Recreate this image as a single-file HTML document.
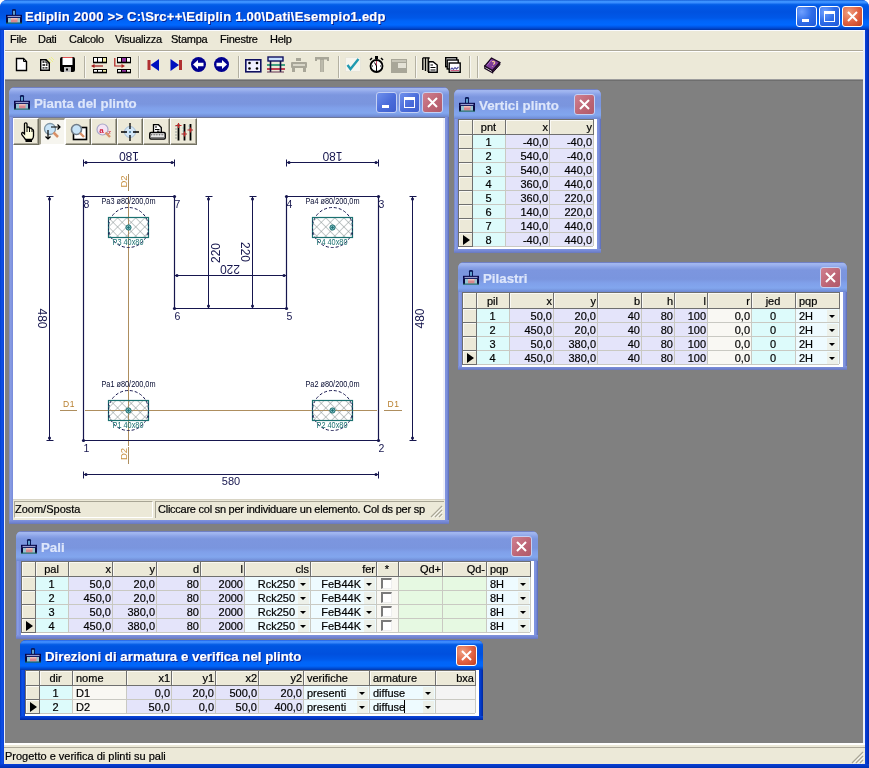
<!DOCTYPE html><html><head><meta charset="utf-8"><style>
html,body{margin:0;padding:0;}
body{width:869px;height:768px;overflow:hidden;position:relative;background:#fff;font-family:"Liberation Sans", sans-serif;font-size:11px;color:#000;}
div{box-sizing:border-box;}
svg{position:absolute;overflow:visible;}
body{-webkit-font-smoothing:antialiased;will-change:transform;-webkit-text-stroke-width:0.2px;}

</style></head><body>
<div style="position:absolute;left:0px;top:0px;width:869px;height:768px;background:#0831D9;border-radius:7px 7px 0 0;"></div>
<div style="position:absolute;left:0px;top:0px;width:869px;height:30px;border-radius:7px 7px 0 0;background:linear-gradient(to bottom,#0A4ECC 0px,#3D95FF 1px,#3A8CFF 3px,#0A66EB 4px,#0058E6 6px,#0052E0 12px,#0058E8 18px,#0064F8 21px,#0068FF 25px,#0055E5 27px,#0040C0 29px,#0030A0 30px);"></div>
<div style="position:absolute;left:0px;top:30px;width:4px;height:738px;background:linear-gradient(to right,#0040D0,#1050E8 2px,#0840D8);"></div>
<div style="position:absolute;left:865px;top:30px;width:4px;height:738px;background:linear-gradient(to right,#0840D8,#0030C0 3px,#002AA8);"></div>
<div style="position:absolute;left:0px;top:764px;width:869px;height:4px;background:linear-gradient(to bottom,#0840D8,#0030B0);"></div>
<svg style="left:6px;top:9px" width="16" height="15" viewBox="0 0 16 15"><rect x="2" y="8.6" width="12" height="5" fill="#98C4D0"/><rect x="6" y="0" width="4" height="6.5" rx="1.2" fill="#0A1A5A"/><rect x="7.2" y="1.8" width="1.6" height="4.5" fill="#78C0E8"/><rect x="0" y="5.8" width="16" height="3" fill="#06064A"/><rect x="1.5" y="6.9" width="13" height="0.9" fill="#B8C0F0"/><rect x="0" y="8.6" width="2" height="5.6" fill="#0A0A40"/><rect x="14" y="8.6" width="2" height="5.6" fill="#0A0A40"/><rect x="5" y="9" width="6.5" height="4.5" fill="#D88890"/><rect x="5" y="9" width="6.5" height="1.5" fill="#F0C0B8"/><rect x="0" y="13.6" width="16" height="1" fill="#1A6A50"/></svg>
<div style="position:absolute;left:25px;top:9px;height:16px;line-height:16px;white-space:nowrap;color:#fff;font-weight:bold;font-size:13px;letter-spacing:0.24px;text-shadow:1px 1px 0 #0A1E8C;">Ediplin 2000 &gt;&gt; C:\Src++\Ediplin 1.00\Dati\Esempio1.edp</div>
<div style="position:absolute;left:796px;top:6px;width:21px;height:21px;border:1px solid #FFFFFF;border-radius:3px;background:radial-gradient(circle at 25% 25%,#6FA0FF,#2E6CE8 50%,#1F58D8);">
<div style="position:absolute;left:5px;top:12px;width:7px;height:3px;background:#fff"></div>
</div>
<div style="position:absolute;left:819px;top:6px;width:21px;height:21px;border:1px solid #FFFFFF;border-radius:3px;background:radial-gradient(circle at 25% 25%,#6FA0FF,#2E6CE8 50%,#1F58D8);">
<div style="position:absolute;left:4px;top:4px;width:11px;height:11px;border:1px solid #fff;border-top-width:3px"></div>
</div>
<div style="position:absolute;left:842px;top:6px;width:21px;height:21px;border:1px solid #FFFFFF;border-radius:3px;background:radial-gradient(circle at 30% 30%,#F0A080,#E06040 55%,#C04020);">
<svg style="left:0;top:0" width="19" height="19"><path d="M5 5 L14 14 M14 5 L5 14" stroke="#fff" stroke-width="2"/></svg>
</div>
<div style="position:absolute;left:4px;top:30px;width:861px;height:20px;background:#ECE9D8;"></div>
<div style="position:absolute;left:10px;top:32px;height:14px;line-height:14px;white-space:nowrap;letter-spacing:-0.25px;">File</div>
<div style="position:absolute;left:38px;top:32px;height:14px;line-height:14px;white-space:nowrap;letter-spacing:-0.25px;">Dati</div>
<div style="position:absolute;left:69px;top:32px;height:14px;line-height:14px;white-space:nowrap;letter-spacing:-0.25px;">Calcolo</div>
<div style="position:absolute;left:115px;top:32px;height:14px;line-height:14px;white-space:nowrap;letter-spacing:-0.25px;">Visualizza</div>
<div style="position:absolute;left:171px;top:32px;height:14px;line-height:14px;white-space:nowrap;letter-spacing:-0.25px;">Stampa</div>
<div style="position:absolute;left:220px;top:32px;height:14px;line-height:14px;white-space:nowrap;letter-spacing:-0.25px;">Finestre</div>
<div style="position:absolute;left:270px;top:32px;height:14px;line-height:14px;white-space:nowrap;letter-spacing:-0.25px;">Help</div>
<div style="position:absolute;left:4px;top:50px;width:861px;height:1px;background:#ACA899;"></div>
<div style="position:absolute;left:4px;top:51px;width:861px;height:1px;background:#FFFFFF;"></div>
<div style="position:absolute;left:4px;top:52px;width:861px;height:28px;background:#ECE9D8;"></div>
<div style="position:absolute;left:4px;top:79px;width:861px;height:1px;background:#9D9D9D;"></div>
<div style="position:absolute;left:84px;top:56px;width:1px;height:22px;background:#B4B1A2;"></div>
<div style="position:absolute;left:85px;top:56px;width:1px;height:22px;background:#F8F7F2;"></div>
<div style="position:absolute;left:138px;top:56px;width:1px;height:22px;background:#B4B1A2;"></div>
<div style="position:absolute;left:139px;top:56px;width:1px;height:22px;background:#F8F7F2;"></div>
<div style="position:absolute;left:238px;top:56px;width:1px;height:22px;background:#B4B1A2;"></div>
<div style="position:absolute;left:239px;top:56px;width:1px;height:22px;background:#F8F7F2;"></div>
<div style="position:absolute;left:338px;top:56px;width:1px;height:22px;background:#B4B1A2;"></div>
<div style="position:absolute;left:339px;top:56px;width:1px;height:22px;background:#F8F7F2;"></div>
<div style="position:absolute;left:415px;top:56px;width:1px;height:22px;background:#B4B1A2;"></div>
<div style="position:absolute;left:416px;top:56px;width:1px;height:22px;background:#F8F7F2;"></div>
<div style="position:absolute;left:469px;top:56px;width:1px;height:22px;background:#B4B1A2;"></div>
<div style="position:absolute;left:470px;top:56px;width:1px;height:22px;background:#F8F7F2;"></div>
<div style="position:absolute;left:477px;top:56px;width:1px;height:22px;background:#B4B1A2;"></div>
<div style="position:absolute;left:478px;top:56px;width:1px;height:22px;background:#F8F7F2;"></div>
<svg style="left:15px;top:57px" width="14" height="15" viewBox="0 0 14 15"><path d="M1.5 1.5 H8.5 L11.5 4.5 V13.5 H1.5 Z" fill="#fff" stroke="#000" stroke-width="1.4"/><path d="M8.5 1.5 V4.5 H11.5" fill="none" stroke="#000" stroke-width="1"/></svg>
<svg style="left:38px;top:56px" width="18" height="16" viewBox="0 0 18 16"><path d="M11 2 L15 6 M13 1 L16 4 M9.5 3.5 L13 7" stroke="#EEF08A" stroke-width="1"/><path d="M2.7 3.7 H8 L11.3 7 V14.3 H2.7 Z" fill="#fff" stroke="#000" stroke-width="1.4"/><path d="M8 3.7 V7 H11.3" fill="none" stroke="#000" stroke-width="1"/><path d="M4.5 6 H6.5 M4.5 9 H7 M7.8 9 H9.5 M4.5 11.8 H6.5 M7.3 11.8 H9.5" stroke="#000" stroke-width="1.3"/></svg>
<svg style="left:60px;top:57px" width="15" height="15" viewBox="0 0 15 15"><rect x="0" y="0" width="15" height="15" rx="2" fill="#000"/><rect x="2.5" y="1" width="10" height="7" fill="#fff"/><rect x="2.5" y="0" width="10" height="1" fill="#E05050"/><rect x="4" y="10" width="7" height="5" fill="#C0C0C0"/><rect x="6" y="11.5" width="2" height="2" fill="#000"/></svg>
<svg style="left:90px;top:57px" width="18" height="16" viewBox="0 0 18 16"><rect x="3.5" y="0.5" width="13" height="5" fill="#fff"/><rect x="12.5" y="0.5" width="4" height="5" fill="#F4F0A8"/><rect x="3.5" y="0.5" width="13" height="5" fill="none" stroke="#000" stroke-width="1"/><path d="M7.5 0.5 V5.5 M12.5 0.5 V5.5" stroke="#000" stroke-width="1"/><path d="M3 5.5 H17" stroke="#000" stroke-width="1.6"/><rect x="3.5" y="12.5" width="13" height="3" fill="#fff"/><rect x="12.5" y="12.5" width="4" height="3" fill="#F4F0A8"/><rect x="3.5" y="12.5" width="13" height="3" fill="none" stroke="#000" stroke-width="1"/><path d="M7.5 12.5 V15.5 M12.5 12.5 V15.5" stroke="#000" stroke-width="1"/><path d="M3 15.5 H17" stroke="#000" stroke-width="1.6"/><path d="M13 9 H3" stroke="#A01818" stroke-width="1.2"/><path d="M1 9 L4.5 7 V11 Z" fill="#A01818"/></svg>
<svg style="left:114px;top:57px" width="18" height="16" viewBox="0 0 18 16"><rect x="3.5" y="0.5" width="13" height="5" fill="#fff"/><rect x="8.0" y="0.5" width="4" height="5" fill="#9030A0"/><rect x="3.5" y="0.5" width="13" height="5" fill="none" stroke="#000" stroke-width="1"/><path d="M7.5 0.5 V5.5 M12.5 0.5 V5.5" stroke="#000" stroke-width="1"/><path d="M3 5.5 H17" stroke="#000" stroke-width="1.6"/><rect x="3.5" y="12.5" width="13" height="3" fill="#fff"/><rect x="8.0" y="12.5" width="4" height="3" fill="#9030A0"/><rect x="3.5" y="12.5" width="13" height="3" fill="none" stroke="#000" stroke-width="1"/><path d="M7.5 12.5 V15.5 M12.5 12.5 V15.5" stroke="#000" stroke-width="1"/><path d="M3 15.5 H17" stroke="#000" stroke-width="1.6"/><path d="M0.8 1 V9 H9" fill="none" stroke="#B02020" stroke-width="1.2"/><path d="M11 9 L7.5 7 V11 Z" fill="#B02020"/></svg>
<svg style="left:147px;top:59px" width="13" height="12" viewBox="0 0 13 12"><rect x="0.5" y="1" width="3" height="10" fill="#B03030"/><path d="M12 0 V12 L3.5 6 Z" fill="#0010C0"/></svg>
<svg style="left:170px;top:59px" width="13" height="12" viewBox="0 0 13 12"><rect x="9" y="1" width="3" height="10" fill="#B03030"/><path d="M0.5 0 V12 L9 6 Z" fill="#0010C0"/></svg>
<svg style="left:190px;top:56px" width="17" height="17" viewBox="0 0 17 17"><circle cx="8.5" cy="8.5" r="7.5" fill="#000090"/><path d="M3 8.5 L8 4 V6.8 H13.5 V10.2 H8 V13 Z" fill="#fff"/></svg>
<svg style="left:213px;top:56px" width="17" height="17" viewBox="0 0 17 17"><circle cx="8.5" cy="8.5" r="7.5" fill="#000090"/><path d="M14 8.5 L9 4 V6.8 H3.5 V10.2 H9 V13 Z" fill="#fff"/></svg>
<svg style="left:245px;top:59px" width="17" height="14" viewBox="0 0 17 14"><rect x="0.8" y="0.8" width="15" height="12" fill="#F0F0FF" stroke="#101060" stroke-width="1.6"/><circle cx="4.5" cy="4" r="1.3" fill="#000"/><circle cx="12" cy="4" r="1.3" fill="#000"/><circle cx="4.5" cy="9.5" r="1.3" fill="#000"/><circle cx="12" cy="9.5" r="1.3" fill="#000"/></svg>
<svg style="left:267px;top:56px" width="18" height="17" viewBox="0 0 18 17"><rect x="1" y="1" width="15" height="4" fill="#C8E0FF" stroke="#101060" stroke-width="1.4"/><rect x="0" y="8" width="18" height="2" fill="#40A080"/><rect x="0" y="12" width="18" height="2" fill="#C04050"/><path d="M3.5 5 V16 M13.5 5 V16" stroke="#101040" stroke-width="1.6"/><path d="M0 16 H17" stroke="#603050" stroke-width="1"/></svg>
<svg style="left:291px;top:58px" width="16" height="14" viewBox="0 0 16 14"><rect x="5" y="0" width="5" height="3" fill="#A8A698"/><rect x="0" y="4" width="16" height="6" rx="1" fill="#A8A698"/><rect x="2" y="6" width="12" height="2" fill="#D8D6C8"/><rect x="1" y="10" width="3" height="4" fill="#A8A698"/><rect x="12" y="10" width="3" height="4" fill="#A8A698"/></svg>
<svg style="left:315px;top:57px" width="14" height="15" viewBox="0 0 14 15"><path d="M0 0 H14 V4 H12 V2.5 H9 V15 H5 V2.5 H2 V4 H0 Z" fill="#A8A698"/><path d="M6.2 3 V15 M7.8 3 V15" stroke="#D8D6C8" stroke-width="0.6"/></svg>
<svg style="left:345px;top:57px" width="16" height="15" viewBox="0 0 16 15"><rect x="0.5" y="0.5" width="15" height="14" fill="#F6F5EE" stroke="#E8E6DA" stroke-width="1"/><path d="M2.5 8 L5.5 12 L13.5 2" fill="none" stroke="#209AB0" stroke-width="2.4"/></svg>
<svg style="left:368px;top:56px" width="17" height="17" viewBox="0 0 17 17"><rect x="7" y="0" width="3" height="3" fill="#000"/><path d="M2 4 L4 2 M15 4 L13 2" stroke="#000" stroke-width="1.5"/><circle cx="8.5" cy="10" r="6" fill="#fff" stroke="#000" stroke-width="1.8"/><path d="M8.5 5 V10" stroke="#C04060" stroke-width="1"/><path d="M8.5 10 L6.5 6.5 M8.5 10 V15 M4 10 H5 M12 10 H13" stroke="#000" stroke-width="1"/></svg>
<svg style="left:391px;top:59px" width="16" height="14" viewBox="0 0 16 14"><rect x="0" y="0" width="16" height="14" fill="#A8A698"/><rect x="1" y="1" width="14" height="2" fill="#C8C6B8"/><rect x="7" y="4" width="8" height="5" fill="#E4E2D6"/></svg>
<svg style="left:422px;top:57px" width="16" height="16" viewBox="0 0 16 16"><path d="M0.8 0.8 V13 M3.5 0.8 V14 M6.2 0.8 V15" stroke="#000" stroke-width="1.4"/><path d="M1 0.8 H7 M3.5 1 H8" stroke="#000" stroke-width="1.2"/><path d="M6.7 4.7 H11 L15.2 8 V15.2 H6.7 Z" fill="#fff" stroke="#000" stroke-width="1.4"/><path d="M8.5 8 H11 M8.5 10.5 H13.5 M8.5 13 H13.5" stroke="#000" stroke-width="1.1"/></svg>
<svg style="left:445px;top:57px" width="16" height="16" viewBox="0 0 16 16"><rect x="0.7" y="0.7" width="11" height="9" fill="#fff" stroke="#000" stroke-width="1.4"/><rect x="2.2" y="3" width="11" height="9" fill="#fff" stroke="#000" stroke-width="1.4"/><rect x="4.2" y="6" width="11" height="9.3" fill="#fff" stroke="#000" stroke-width="1.4"/><path d="M5.5 12.5 L7 11 L8.5 12.5 L10 10.5 L11.5 12 L13.5 10" fill="none" stroke="#5050A0" stroke-width="1.1"/><path d="M5.5 13.5 H14" stroke="#C03060" stroke-width="0.8"/></svg>
<svg style="left:484px;top:57px" width="17" height="17" viewBox="0 0 17 17"><path d="M0.8 9 L8.5 13.5 V15.8 L0.8 11.3 Z" fill="#fff" stroke="#1A0820" stroke-width="1.2"/><path d="M8.5 13.5 L15.8 5.5 V7.8 L8.5 15.8 Z" fill="#3A1040" stroke="#1A0820" stroke-width="1"/><path d="M7.5 1 L15.8 5.5 L8.5 13.5 L0.8 9 Z" fill="#7E3C98" stroke="#1A0820" stroke-width="1.3"/><path d="M3 8.5 L7.5 3" stroke="#B070D0" stroke-width="1"/><path d="M8 4.8 Q9.8 3.8 10.6 5.2 Q11 6.5 9.2 7.5 M8.4 9.3 L8.6 9.8" fill="none" stroke="#F0C890" stroke-width="1.3"/></svg>
<div style="position:absolute;left:4px;top:80px;width:861px;height:663px;background:#808080;"></div>
<div style="position:absolute;left:9px;top:87px;width:440px;height:437px;border-radius:6px 6px 0 0;overflow:hidden;background:#7B90DC;">
<div style="position:absolute;left:0;top:0;width:440px;height:30px;background:linear-gradient(to bottom,#7080C4 0px,#7080C4 1px,#A4B8F0 1px,#9CB2EE 3px,#8CA4E8 5px,#7C96DF 8px,#7A95DE 17px,#80A0EA 21px,#82A6EE 26px,#7898E0 28px,#6E86D0 30px);"></div>
<div style="position:absolute;left:0;top:30px;width:4px;height:407px;background:linear-gradient(to right,#6A78B8,#8A9EE4 1px,#8094E0 3px,#7488D8 4px);"></div>
<div style="position:absolute;left:436px;top:30px;width:4px;height:407px;background:linear-gradient(to right,#8094E0,#7C90DC 2px,#6A7CC8 3px,#5A6AB4 4px);"></div>
<div style="position:absolute;left:0;top:433px;width:440px;height:4px;background:linear-gradient(to bottom,#8094E0,#6E80CC 3px,#6A78B8 4px);"></div>
<svg style="left:5px;top:8px" width="16" height="15" viewBox="0 0 16 15"><rect x="2" y="8.6" width="12" height="5" fill="#98C4D0"/><rect x="6" y="0" width="4" height="6.5" rx="1.2" fill="#0A1A5A"/><rect x="7.2" y="1.8" width="1.6" height="4.5" fill="#78C0E8"/><rect x="0" y="5.8" width="16" height="3" fill="#06064A"/><rect x="1.5" y="6.9" width="13" height="0.9" fill="#B8C0F0"/><rect x="0" y="8.6" width="2" height="5.6" fill="#0A0A40"/><rect x="14" y="8.6" width="2" height="5.6" fill="#0A0A40"/><rect x="5" y="9" width="6.5" height="4.5" fill="#D88890"/><rect x="5" y="9" width="6.5" height="1.5" fill="#F0C0B8"/><rect x="0" y="13.6" width="16" height="1" fill="#1A6A50"/></svg>
<div style="position:absolute;left:25px;top:9px;height:16px;line-height:16px;white-space:nowrap;color:#DDE6FB;font-weight:bold;font-size:13.3px;">Pianta del plinto</div>
</div>
<div style="position:absolute;left:422px;top:92px;width:21px;height:21px;border:1px solid #C4D0F4;border-radius:3px;background:linear-gradient(135deg,#D08090,#BC6474 60%,#B05A6A);">
<svg style="left:0;top:0" width="19" height="19"><path d="M5 5 L14 14 M14 5 L5 14" stroke="#fff" stroke-width="2"/></svg>
</div>
<div style="position:absolute;left:399px;top:92px;width:21px;height:21px;border:1px solid #C4D0F4;border-radius:3px;background:linear-gradient(135deg,#6F90EC,#4A6CDA 55%,#3E5ECE);">
<div style="position:absolute;left:4px;top:4px;width:11px;height:11px;border:1px solid #fff;border-top-width:3px"></div>
</div>
<div style="position:absolute;left:376px;top:92px;width:21px;height:21px;border:1px solid #C4D0F4;border-radius:3px;background:linear-gradient(135deg,#6F90EC,#4A6CDA 55%,#3E5ECE);">
<div style="position:absolute;left:5px;top:12px;width:7px;height:3px;background:#fff"></div>
</div>
<div style="position:absolute;left:13px;top:117px;width:432px;height:383px;background:#FFFFFF;"></div>
<div style="position:absolute;left:13px;top:117px;width:432px;height:1px;background:#6E7898;"></div>
<div style="position:absolute;left:443px;top:118px;width:2px;height:381px;background:#EEF0FA;"></div>
<div style="position:absolute;left:13px;top:118px;width:184px;height:27px;background:#ECE9D8;"></div>
<div style="position:absolute;left:13px;top:118px;width:26px;height:27px;background:#ECE9D8;border-top:1px solid #FFFFFF;border-left:1px solid #FFFFFF;border-right:1px solid #707060;border-bottom:1px solid #707060;box-shadow:inset -1px -1px 0 #ACA899;"></div>
<div style="position:absolute;left:39px;top:118px;width:26px;height:27px;background:#F6F5EF;border-top:2px solid #A09D8C;border-left:2px solid #A09D8C;border-bottom:1px solid #fff;border-right:1px solid #fff;"></div>
<div style="position:absolute;left:65px;top:118px;width:26px;height:27px;background:#ECE9D8;border-top:1px solid #FFFFFF;border-left:1px solid #FFFFFF;border-right:1px solid #707060;border-bottom:1px solid #707060;box-shadow:inset -1px -1px 0 #ACA899;"></div>
<div style="position:absolute;left:91px;top:118px;width:26px;height:27px;background:#ECE9D8;border-top:1px solid #FFFFFF;border-left:1px solid #FFFFFF;border-right:1px solid #707060;border-bottom:1px solid #707060;box-shadow:inset -1px -1px 0 #ACA899;"></div>
<div style="position:absolute;left:117px;top:118px;width:26px;height:27px;background:#ECE9D8;border-top:1px solid #FFFFFF;border-left:1px solid #FFFFFF;border-right:1px solid #707060;border-bottom:1px solid #707060;box-shadow:inset -1px -1px 0 #ACA899;"></div>
<div style="position:absolute;left:143px;top:118px;width:27px;height:27px;background:#ECE9D8;border-top:1px solid #FFFFFF;border-left:1px solid #FFFFFF;border-right:1px solid #707060;border-bottom:1px solid #707060;box-shadow:inset -1px -1px 0 #ACA899;"></div>
<div style="position:absolute;left:170px;top:118px;width:27px;height:27px;background:#ECE9D8;border-top:1px solid #FFFFFF;border-left:1px solid #FFFFFF;border-right:1px solid #707060;border-bottom:1px solid #707060;box-shadow:inset -1px -1px 0 #ACA899;"></div>
<svg style="left:21px;top:122px" width="14" height="20" viewBox="0 0 14 20"><path d="M3.5 10.5 V2 Q3.5 0.8 4.75 0.8 Q6 0.8 6 2 V6 Q6 5 7.25 5 Q8.5 5 8.5 6 V7 Q8.5 6 9.75 6 Q11 6 11 7 V8 Q11 7.2 11.8 7.5 Q12.5 8 12.5 9 V14 Q12.5 16 11 17.5 H4.5 Q3 15.5 1.2 13.2 Q0.3 12 0.8 11 Q1.5 10 2.5 11 L3.5 12 Z" fill="#FFFFE0" stroke="#000" stroke-width="1.3"/><path d="M6 6 V10 M8.5 7 V10 M11 8 V10" stroke="#000" stroke-width="1"/><rect x="4.5" y="18" width="6.5" height="2" fill="#000"/></svg>
<svg style="left:43px;top:122px" width="20" height="20" viewBox="0 0 20 20"><circle cx="7" cy="7" r="5.5" fill="#C8E4F8" stroke="#8098A8" stroke-width="1.3"/><path d="M10.5 10.5 L15 15" stroke="#D89068" stroke-width="2.5"/><path d="M8 5 H17 M14.5 2.5 L17 5 L14.5 7.5 M5 8 V17 M2.5 14.5 L5 17 L7.5 14.5" fill="none" stroke="#000" stroke-width="1.2"/></svg>
<svg style="left:70px;top:123px" width="18" height="18" viewBox="0 0 18 18"><rect x="3.5" y="4.5" width="13" height="12" fill="#fff" stroke="#000" stroke-width="1.6"/><circle cx="6.5" cy="6.5" r="5" fill="#C8E4F8" stroke="#707C88" stroke-width="1.6"/><path d="M10 10 L14 14" stroke="#D89068" stroke-width="2.4"/></svg>
<svg style="left:96px;top:123px" width="18" height="18" viewBox="0 0 18 18"><circle cx="6.5" cy="6.5" r="5.5" fill="#F4E4F4" stroke="#A8A8C8" stroke-width="1.2"/><text x="3.3" y="9.5" font-size="8" font-weight="bold" fill="#D02040" font-family="Liberation Sans">a</text><path d="M9.5 9.5 L14 14" stroke="#D89068" stroke-width="2.4"/><text x="12" y="11" font-size="6" fill="#D02040" font-family="Liberation Sans">z</text></svg>
<svg style="left:121px;top:123px" width="18" height="18" viewBox="0 0 18 18"><circle cx="9" cy="9" r="5.5" fill="#D4E8F8" stroke="#A8C0D8" stroke-width="1"/><path d="M9 0 V6 M9 12 V18 M0 9 H6 M12 9 H18" stroke="#000" stroke-width="1.3"/><path d="M8 9 H10 M9 8 V10" stroke="#5080A0" stroke-width="1"/></svg>
<svg style="left:149px;top:124px" width="17" height="16" viewBox="0 0 17 16"><path d="M4.5 0.7 H9.5 L12.3 3.5 V9 H4.5 Z" fill="#fff" stroke="#000" stroke-width="1.3"/><path d="M6 3 H8 M6 5.5 H10.5 M8 7.2 H10.5" stroke="#000" stroke-width="1"/><rect x="0.8" y="8.5" width="15.4" height="6.5" rx="1.2" fill="#fff" stroke="#000" stroke-width="1.5"/><path d="M2 10.8 H15" stroke="#707070" stroke-width="1.6" stroke-dasharray="1 0.6"/><rect x="1.5" y="12.8" width="14" height="1.6" fill="#808080"/></svg>
<svg style="left:173px;top:122px" width="20" height="20" viewBox="0 0 20 20"><path d="M2 4 H4 M2 7 H4 M2 10 H4 M2 13 H4 M2 16 H4" stroke="#909898" stroke-width="0.9"/><path d="M9 6 H11 M9 9 H11 M9 12 H11 M15 4 H17 M15 7 H17" stroke="#A8D0D8" stroke-width="0.9"/><path d="M5.5 2 V18.5 M11.5 2 V18.5 M17.5 2 V18.5" stroke="#000" stroke-width="1.8"/><path d="M2.5 3.5 H8.5 M5.5 1 V6 M14.5 8 H20 M17.5 5.5 V10.5 M8.5 12 H14 M11.5 9.5 V14.5" stroke="#C02828" stroke-width="1.2"/></svg>
<div style="position:absolute;left:13px;top:145px;width:432px;height:354px;overflow:hidden;">
<svg style="left:-13px;top:-145px" width="869" height="768" viewBox="0 0 869 768"><defs><pattern id="hatch" width="6.4" height="6.4" patternUnits="userSpaceOnUse" patternTransform="rotate(45)"><path d="M0 0 V6.4 M0 0 H6.4" stroke="#808C8C" stroke-width="0.9"/></pattern></defs><line x1="128.5" y1="174" x2="128.5" y2="191" stroke="#AE8E5E" stroke-width="1"/><line x1="128.5" y1="197" x2="128.5" y2="446" stroke="#AE8E5E" stroke-width="1"/><line x1="128.5" y1="447" x2="128.5" y2="464" stroke="#AE8E5E" stroke-width="1"/><line x1="60" y1="410.5" x2="77" y2="410.5" stroke="#AE8E5E" stroke-width="1"/><line x1="85" y1="410.5" x2="377" y2="410.5" stroke="#AE8E5E" stroke-width="1"/><line x1="384" y1="410.5" x2="402" y2="410.5" stroke="#AE8E5E" stroke-width="1"/><text x="123" y="181.5" font-size="9.5" fill="#C89040" text-anchor="middle" dominant-baseline="central" font-family="Liberation Sans" transform="rotate(-90 123 181.5)">D2</text><text x="123" y="454" font-size="9.5" fill="#C89040" text-anchor="middle" dominant-baseline="central" font-family="Liberation Sans" transform="rotate(-90 123 454)">D2</text><text x="66" y="404" font-size="8.5" fill="#B88030" text-anchor="middle" dominant-baseline="central" font-family="Liberation Sans">D</text><text x="72" y="404" font-size="8.5" fill="#B88030" text-anchor="middle" dominant-baseline="central" font-family="Liberation Sans">1</text><text x="390.5" y="404" font-size="8.5" fill="#B88030" text-anchor="middle" dominant-baseline="central" font-family="Liberation Sans">D</text><text x="396.5" y="404" font-size="8.5" fill="#B88030" text-anchor="middle" dominant-baseline="central" font-family="Liberation Sans">1</text><polygon points="83.5,440.5 378.5,440.5 378.5,196.5 286.5,196.5 286.5,308.5 174.5,308.5 174.5,196.5 83.5,196.5" fill="none" stroke="#16164E" stroke-width="1.2"/><circle cx="83.5" cy="440.5" r="1.6" fill="#16164E"/><circle cx="378.5" cy="440.5" r="1.6" fill="#16164E"/><circle cx="378.5" cy="196.5" r="1.6" fill="#16164E"/><circle cx="286.5" cy="196.5" r="1.6" fill="#16164E"/><circle cx="286.5" cy="308.5" r="1.6" fill="#16164E"/><circle cx="174.5" cy="308.5" r="1.6" fill="#16164E"/><circle cx="174.5" cy="196.5" r="1.6" fill="#16164E"/><circle cx="83.5" cy="196.5" r="1.6" fill="#16164E"/><text x="86.5" y="448.0" font-size="10.5" fill="#16164E" text-anchor="middle" dominant-baseline="central" font-family="Liberation Sans">1</text><text x="381.5" y="448.0" font-size="10.5" fill="#16164E" text-anchor="middle" dominant-baseline="central" font-family="Liberation Sans">2</text><text x="381.5" y="204.0" font-size="10.5" fill="#16164E" text-anchor="middle" dominant-baseline="central" font-family="Liberation Sans">3</text><text x="289.5" y="204.0" font-size="10.5" fill="#16164E" text-anchor="middle" dominant-baseline="central" font-family="Liberation Sans">4</text><text x="289.5" y="316.0" font-size="10.5" fill="#16164E" text-anchor="middle" dominant-baseline="central" font-family="Liberation Sans">5</text><text x="177.5" y="316.0" font-size="10.5" fill="#16164E" text-anchor="middle" dominant-baseline="central" font-family="Liberation Sans">6</text><text x="177.5" y="204.0" font-size="10.5" fill="#16164E" text-anchor="middle" dominant-baseline="central" font-family="Liberation Sans">7</text><text x="86.5" y="204.0" font-size="10.5" fill="#16164E" text-anchor="middle" dominant-baseline="central" font-family="Liberation Sans">8</text><line x1="83.5" y1="162.5" x2="174.5" y2="162.5" stroke="#16164E" stroke-width="1"/><line x1="83.5" y1="159.5" x2="83.5" y2="166.5" stroke="#16164E" stroke-width="1"/><line x1="174.5" y1="159.5" x2="174.5" y2="166.5" stroke="#16164E" stroke-width="1"/><circle cx="86.0" cy="162.5" r="1.5" fill="#16164E"/><circle cx="172.0" cy="162.5" r="1.5" fill="#16164E"/><text x="129.0" y="156" font-size="13" fill="#16164E" text-anchor="middle" dominant-baseline="central" font-family="Liberation Sans" transform="rotate(180 129.0 156)" textLength="20" lengthAdjust="spacingAndGlyphs">180</text><line x1="286.5" y1="162.5" x2="378.5" y2="162.5" stroke="#16164E" stroke-width="1"/><line x1="286.5" y1="159.5" x2="286.5" y2="166.5" stroke="#16164E" stroke-width="1"/><line x1="378.5" y1="159.5" x2="378.5" y2="166.5" stroke="#16164E" stroke-width="1"/><circle cx="289.0" cy="162.5" r="1.5" fill="#16164E"/><circle cx="376.0" cy="162.5" r="1.5" fill="#16164E"/><text x="332.5" y="156" font-size="13" fill="#16164E" text-anchor="middle" dominant-baseline="central" font-family="Liberation Sans" transform="rotate(180 332.5 156)" textLength="20" lengthAdjust="spacingAndGlyphs">180</text><line x1="83.5" y1="474.5" x2="378.5" y2="474.5" stroke="#16164E" stroke-width="1"/><line x1="83.5" y1="471.5" x2="83.5" y2="478.5" stroke="#16164E" stroke-width="1"/><line x1="378.5" y1="471.5" x2="378.5" y2="478.5" stroke="#16164E" stroke-width="1"/><circle cx="86.0" cy="474.5" r="1.5" fill="#16164E"/><circle cx="376.0" cy="474.5" r="1.5" fill="#16164E"/><text x="231.0" y="481" font-size="11" fill="#16164E" text-anchor="middle" dominant-baseline="central" font-family="Liberation Sans">580</text><line x1="49.5" y1="196.5" x2="49.5" y2="440.5" stroke="#16164E" stroke-width="1"/><line x1="46.5" y1="196.5" x2="53.5" y2="196.5" stroke="#16164E" stroke-width="1"/><line x1="46.5" y1="440.5" x2="53.5" y2="440.5" stroke="#16164E" stroke-width="1"/><circle cx="49.5" cy="199.0" r="1.5" fill="#16164E"/><circle cx="49.5" cy="438.0" r="1.5" fill="#16164E"/><text x="42" y="318.5" font-size="13" fill="#16164E" text-anchor="middle" dominant-baseline="central" font-family="Liberation Sans" transform="rotate(90 42 318.5)" textLength="20" lengthAdjust="spacingAndGlyphs">480</text><line x1="412.5" y1="196.5" x2="412.5" y2="440.5" stroke="#16164E" stroke-width="1"/><line x1="409.5" y1="196.5" x2="416.5" y2="196.5" stroke="#16164E" stroke-width="1"/><line x1="409.5" y1="440.5" x2="416.5" y2="440.5" stroke="#16164E" stroke-width="1"/><circle cx="412.5" cy="199.0" r="1.5" fill="#16164E"/><circle cx="412.5" cy="438.0" r="1.5" fill="#16164E"/><text x="419.5" y="318.5" font-size="13" fill="#16164E" text-anchor="middle" dominant-baseline="central" font-family="Liberation Sans" transform="rotate(-90 419.5 318.5)" textLength="20" lengthAdjust="spacingAndGlyphs">480</text><line x1="208.5" y1="196.5" x2="208.5" y2="308.5" stroke="#16164E" stroke-width="1"/><line x1="205.5" y1="196.5" x2="212.5" y2="196.5" stroke="#16164E" stroke-width="1"/><circle cx="208.5" cy="199" r="1.5" fill="#16164E"/><circle cx="208.5" cy="306" r="1.5" fill="#16164E"/><text x="215" y="253" font-size="13" fill="#16164E" text-anchor="middle" dominant-baseline="central" font-family="Liberation Sans" transform="rotate(-90 215 253)" textLength="20" lengthAdjust="spacingAndGlyphs">220</text><line x1="252.5" y1="196.5" x2="252.5" y2="308.5" stroke="#16164E" stroke-width="1"/><line x1="249.5" y1="196.5" x2="256.5" y2="196.5" stroke="#16164E" stroke-width="1"/><circle cx="252.5" cy="199" r="1.5" fill="#16164E"/><circle cx="252.5" cy="306" r="1.5" fill="#16164E"/><text x="245.5" y="252" font-size="13" fill="#16164E" text-anchor="middle" dominant-baseline="central" font-family="Liberation Sans" transform="rotate(90 245.5 252)" textLength="20" lengthAdjust="spacingAndGlyphs">220</text><line x1="174.5" y1="275.5" x2="286.5" y2="275.5" stroke="#16164E" stroke-width="1"/><circle cx="177" cy="275.5" r="1.5" fill="#16164E"/><circle cx="284" cy="275.5" r="1.5" fill="#16164E"/><text x="230" y="269" font-size="13" fill="#16164E" text-anchor="middle" dominant-baseline="central" font-family="Liberation Sans" transform="rotate(180 230 269)" textLength="20" lengthAdjust="spacingAndGlyphs">220</text><circle cx="128.5" cy="410.5" r="20" fill="none" stroke="#16164E" stroke-width="1" stroke-dasharray="3 2"/><rect x="108.5" y="400.5" width="40" height="20" fill="url(#hatch)"/><rect x="108.5" y="400.5" width="40" height="20" fill="none" stroke="#1A7070" stroke-width="1.2"/><path d="M108.5 403.5 V417.5 M148.5 403.5 V417.5" stroke="#16164E" stroke-width="0.8" stroke-dasharray="2 2"/><circle cx="128.5" cy="410.5" r="2.6" fill="#80B8C0" stroke="#1A7070" stroke-width="1"/><path d="M127.0 410.5 H130.0 M128.5 409.0 V412.0" stroke="#1A7070" stroke-width="0.8"/><text x="128.5" y="383.5" font-size="8.5" fill="#050A30" text-anchor="middle" dominant-baseline="central" font-family="Liberation Sans" textLength="54" lengthAdjust="spacingAndGlyphs">Pa1 ø80/200,0m</text><text x="128.0" y="425.0" font-size="8.5" fill="#1A7070" text-anchor="middle" dominant-baseline="central" font-family="Liberation Sans" textLength="31" lengthAdjust="spacingAndGlyphs">P1 40x80</text><circle cx="332.5" cy="410.5" r="20" fill="none" stroke="#16164E" stroke-width="1" stroke-dasharray="3 2"/><rect x="312.5" y="400.5" width="40" height="20" fill="url(#hatch)"/><rect x="312.5" y="400.5" width="40" height="20" fill="none" stroke="#1A7070" stroke-width="1.2"/><path d="M312.5 403.5 V417.5 M352.5 403.5 V417.5" stroke="#16164E" stroke-width="0.8" stroke-dasharray="2 2"/><circle cx="332.5" cy="410.5" r="2.6" fill="#80B8C0" stroke="#1A7070" stroke-width="1"/><path d="M331.0 410.5 H334.0 M332.5 409.0 V412.0" stroke="#1A7070" stroke-width="0.8"/><text x="332.5" y="383.5" font-size="8.5" fill="#050A30" text-anchor="middle" dominant-baseline="central" font-family="Liberation Sans" textLength="54" lengthAdjust="spacingAndGlyphs">Pa2 ø80/200,0m</text><text x="332.0" y="425.0" font-size="8.5" fill="#1A7070" text-anchor="middle" dominant-baseline="central" font-family="Liberation Sans" textLength="31" lengthAdjust="spacingAndGlyphs">P2 40x80</text><circle cx="128.5" cy="227.5" r="20" fill="none" stroke="#16164E" stroke-width="1" stroke-dasharray="3 2"/><rect x="108.5" y="217.5" width="40" height="20" fill="url(#hatch)"/><rect x="108.5" y="217.5" width="40" height="20" fill="none" stroke="#1A7070" stroke-width="1.2"/><path d="M108.5 220.5 V234.5 M148.5 220.5 V234.5" stroke="#16164E" stroke-width="0.8" stroke-dasharray="2 2"/><circle cx="128.5" cy="227.5" r="2.6" fill="#80B8C0" stroke="#1A7070" stroke-width="1"/><path d="M127.0 227.5 H130.0 M128.5 226.0 V229.0" stroke="#1A7070" stroke-width="0.8"/><text x="128.5" y="200.5" font-size="8.5" fill="#050A30" text-anchor="middle" dominant-baseline="central" font-family="Liberation Sans" textLength="54" lengthAdjust="spacingAndGlyphs">Pa3 ø80/200,0m</text><text x="128.0" y="242.0" font-size="8.5" fill="#1A7070" text-anchor="middle" dominant-baseline="central" font-family="Liberation Sans" textLength="31" lengthAdjust="spacingAndGlyphs">P3 40x80</text><circle cx="332.5" cy="227.5" r="20" fill="none" stroke="#16164E" stroke-width="1" stroke-dasharray="3 2"/><rect x="312.5" y="217.5" width="40" height="20" fill="url(#hatch)"/><rect x="312.5" y="217.5" width="40" height="20" fill="none" stroke="#1A7070" stroke-width="1.2"/><path d="M312.5 220.5 V234.5 M352.5 220.5 V234.5" stroke="#16164E" stroke-width="0.8" stroke-dasharray="2 2"/><circle cx="332.5" cy="227.5" r="2.6" fill="#80B8C0" stroke="#1A7070" stroke-width="1"/><path d="M331.0 227.5 H334.0 M332.5 226.0 V229.0" stroke="#1A7070" stroke-width="0.8"/><text x="332.5" y="200.5" font-size="8.5" fill="#050A30" text-anchor="middle" dominant-baseline="central" font-family="Liberation Sans" textLength="54" lengthAdjust="spacingAndGlyphs">Pa4 ø80/200,0m</text><text x="332.0" y="242.0" font-size="8.5" fill="#1A7070" text-anchor="middle" dominant-baseline="central" font-family="Liberation Sans" textLength="31" lengthAdjust="spacingAndGlyphs">P4 40x80</text></svg>
</div>
<div style="position:absolute;left:13px;top:499px;width:432px;height:21px;background:#ECE9D8;"></div>
<div style="position:absolute;left:13px;top:499px;width:432px;height:1px;background:#D8D4C4;"></div>
<div style="position:absolute;left:14px;top:501px;width:139px;height:17px;border-top:1px solid #A8A595;border-left:1px solid #A8A595;border-right:1px solid #FFFFFF;border-bottom:1px solid #FFFFFF;"></div>
<div style="position:absolute;left:155px;top:501px;width:289px;height:17px;border-top:1px solid #A8A595;border-left:1px solid #A8A595;"></div>
<div style="position:absolute;left:15px;top:502px;height:15px;line-height:15px;white-space:nowrap;">Zoom/Sposta</div>
<div style="position:absolute;left:158px;top:502px;height:15px;line-height:15px;white-space:nowrap;letter-spacing:-0.25px;">Cliccare col sn per individuare un elemento. Col ds per sp</div>
<svg style="left:430px;top:505px" width="13" height="13" viewBox="0 0 13 13"><path d="M12 1 L1 12 M12 5 L5 12 M12 9 L9 12" stroke="#A8A595" stroke-width="1.2"/><path d="M12.8 2 L2 12.8 M12.8 6 L6 12.8 M12.8 10 L10 12.8" stroke="#fff" stroke-width="0.8"/></svg>
<div style="position:absolute;left:454px;top:89px;width:147px;height:164px;border-radius:6px 6px 0 0;overflow:hidden;background:#7B90DC;">
<div style="position:absolute;left:0;top:0;width:147px;height:30px;background:linear-gradient(to bottom,#7080C4 0px,#7080C4 1px,#A4B8F0 1px,#9CB2EE 3px,#8CA4E8 5px,#7C96DF 8px,#7A95DE 17px,#80A0EA 21px,#82A6EE 26px,#7898E0 28px,#6E86D0 30px);"></div>
<div style="position:absolute;left:0;top:30px;width:4px;height:134px;background:linear-gradient(to right,#6A78B8,#8A9EE4 1px,#8094E0 3px,#7488D8 4px);"></div>
<div style="position:absolute;left:143px;top:30px;width:4px;height:134px;background:linear-gradient(to right,#8094E0,#7C90DC 2px,#6A7CC8 3px,#5A6AB4 4px);"></div>
<div style="position:absolute;left:0;top:160px;width:147px;height:4px;background:linear-gradient(to bottom,#8094E0,#6E80CC 3px,#6A78B8 4px);"></div>
<svg style="left:5px;top:8px" width="16" height="15" viewBox="0 0 16 15"><rect x="2" y="8.6" width="12" height="5" fill="#98C4D0"/><rect x="6" y="0" width="4" height="6.5" rx="1.2" fill="#0A1A5A"/><rect x="7.2" y="1.8" width="1.6" height="4.5" fill="#78C0E8"/><rect x="0" y="5.8" width="16" height="3" fill="#06064A"/><rect x="1.5" y="6.9" width="13" height="0.9" fill="#B8C0F0"/><rect x="0" y="8.6" width="2" height="5.6" fill="#0A0A40"/><rect x="14" y="8.6" width="2" height="5.6" fill="#0A0A40"/><rect x="5" y="9" width="6.5" height="4.5" fill="#D88890"/><rect x="5" y="9" width="6.5" height="1.5" fill="#F0C0B8"/><rect x="0" y="13.6" width="16" height="1" fill="#1A6A50"/></svg>
<div style="position:absolute;left:25px;top:9px;height:16px;line-height:16px;white-space:nowrap;color:#DDE6FB;font-weight:bold;font-size:13.3px;">Vertici plinto</div>
</div>
<div style="position:absolute;left:574px;top:94px;width:21px;height:21px;border:1px solid #C4D0F4;border-radius:3px;background:linear-gradient(135deg,#D08090,#BC6474 60%,#B05A6A);">
<svg style="left:0;top:0" width="19" height="19"><path d="M5 5 L14 14 M14 5 L5 14" stroke="#fff" stroke-width="2"/></svg>
</div>
<div style="position:absolute;left:458px;top:119px;width:139px;height:130px;background:#FFFFFF;"></div>
<div style="position:absolute;left:458px;top:119px;width:135px;height:15px;background:#ECE9D8;"></div>
<div style="position:absolute;left:458px;top:119px;width:14px;height:127px;background:#ECE9D8;"></div>
<div style="position:absolute;left:472px;top:134px;width:33px;height:112px;background:#DDFBFB;"></div>
<div style="position:absolute;left:505px;top:134px;width:44px;height:112px;background:#E4E4FA;"></div>
<div style="position:absolute;left:549px;top:134px;width:44px;height:112px;background:#E4E4FA;"></div>
<div style="position:absolute;left:472px;top:148px;width:121px;height:1px;background:#C9C9C2;"></div>
<div style="position:absolute;left:472px;top:162px;width:121px;height:1px;background:#C9C9C2;"></div>
<div style="position:absolute;left:472px;top:176px;width:121px;height:1px;background:#C9C9C2;"></div>
<div style="position:absolute;left:472px;top:190px;width:121px;height:1px;background:#C9C9C2;"></div>
<div style="position:absolute;left:472px;top:204px;width:121px;height:1px;background:#C9C9C2;"></div>
<div style="position:absolute;left:472px;top:218px;width:121px;height:1px;background:#C9C9C2;"></div>
<div style="position:absolute;left:472px;top:232px;width:121px;height:1px;background:#C9C9C2;"></div>
<div style="position:absolute;left:472px;top:246px;width:121px;height:1px;background:#C9C9C2;"></div>
<div style="position:absolute;left:505px;top:134px;width:1px;height:112px;background:#C9C9C2;"></div>
<div style="position:absolute;left:549px;top:134px;width:1px;height:112px;background:#C9C9C2;"></div>
<div style="position:absolute;left:593px;top:134px;width:1px;height:112px;background:#C9C9C2;"></div>
<div style="position:absolute;left:458px;top:119px;width:136px;height:1px;background:#6F6F6F;"></div>
<div style="position:absolute;left:458px;top:119px;width:1px;height:128px;background:#6F6F6F;"></div>
<div style="position:absolute;left:458px;top:134px;width:136px;height:1px;background:#6F6F6F;"></div>
<div style="position:absolute;left:472px;top:119px;width:1px;height:15px;background:#6F6F6F;"></div>
<div style="position:absolute;left:505px;top:119px;width:1px;height:15px;background:#6F6F6F;"></div>
<div style="position:absolute;left:549px;top:119px;width:1px;height:15px;background:#6F6F6F;"></div>
<div style="position:absolute;left:593px;top:119px;width:1px;height:15px;background:#6F6F6F;"></div>
<div style="position:absolute;left:472px;top:119px;width:1px;height:128px;background:#6F6F6F;"></div>
<div style="position:absolute;left:458px;top:148px;width:14px;height:1px;background:#6F6F6F;"></div>
<div style="position:absolute;left:458px;top:162px;width:14px;height:1px;background:#6F6F6F;"></div>
<div style="position:absolute;left:458px;top:176px;width:14px;height:1px;background:#6F6F6F;"></div>
<div style="position:absolute;left:458px;top:190px;width:14px;height:1px;background:#6F6F6F;"></div>
<div style="position:absolute;left:458px;top:204px;width:14px;height:1px;background:#6F6F6F;"></div>
<div style="position:absolute;left:458px;top:218px;width:14px;height:1px;background:#6F6F6F;"></div>
<div style="position:absolute;left:458px;top:232px;width:14px;height:1px;background:#6F6F6F;"></div>
<div style="position:absolute;left:458px;top:246px;width:14px;height:1px;background:#6F6F6F;"></div>
<div style="position:absolute;left:459px;top:120px;width:13px;height:1px;background:#FAF9F4;"></div>
<div style="position:absolute;left:459px;top:120px;width:1px;height:14px;background:#FAF9F4;"></div>
<div style="position:absolute;left:473px;top:120px;width:32px;height:1px;background:#FAF9F4;"></div>
<div style="position:absolute;left:473px;top:120px;width:1px;height:14px;background:#FAF9F4;"></div>
<div style="position:absolute;left:506px;top:120px;width:43px;height:1px;background:#FAF9F4;"></div>
<div style="position:absolute;left:506px;top:120px;width:1px;height:14px;background:#FAF9F4;"></div>
<div style="position:absolute;left:550px;top:120px;width:43px;height:1px;background:#FAF9F4;"></div>
<div style="position:absolute;left:550px;top:120px;width:1px;height:14px;background:#FAF9F4;"></div>
<div style="position:absolute;left:459px;top:135px;width:1px;height:13px;background:#FAF9F4;"></div>
<div style="position:absolute;left:459px;top:135px;width:13px;height:1px;background:#FAF9F4;"></div>
<div style="position:absolute;left:459px;top:149px;width:1px;height:13px;background:#FAF9F4;"></div>
<div style="position:absolute;left:459px;top:149px;width:13px;height:1px;background:#FAF9F4;"></div>
<div style="position:absolute;left:459px;top:163px;width:1px;height:13px;background:#FAF9F4;"></div>
<div style="position:absolute;left:459px;top:163px;width:13px;height:1px;background:#FAF9F4;"></div>
<div style="position:absolute;left:459px;top:177px;width:1px;height:13px;background:#FAF9F4;"></div>
<div style="position:absolute;left:459px;top:177px;width:13px;height:1px;background:#FAF9F4;"></div>
<div style="position:absolute;left:459px;top:191px;width:1px;height:13px;background:#FAF9F4;"></div>
<div style="position:absolute;left:459px;top:191px;width:13px;height:1px;background:#FAF9F4;"></div>
<div style="position:absolute;left:459px;top:205px;width:1px;height:13px;background:#FAF9F4;"></div>
<div style="position:absolute;left:459px;top:205px;width:13px;height:1px;background:#FAF9F4;"></div>
<div style="position:absolute;left:459px;top:219px;width:1px;height:13px;background:#FAF9F4;"></div>
<div style="position:absolute;left:459px;top:219px;width:13px;height:1px;background:#FAF9F4;"></div>
<div style="position:absolute;left:459px;top:233px;width:1px;height:13px;background:#FAF9F4;"></div>
<div style="position:absolute;left:459px;top:233px;width:13px;height:1px;background:#FAF9F4;"></div>
<div style="position:absolute;left:472px;width:33px;top:120px;height:15px;line-height:15px;white-space:nowrap;text-align:center;">pnt</div>
<div style="position:absolute;right:321px;top:120px;height:15px;line-height:15px;white-space:nowrap;text-align:right;">x</div>
<div style="position:absolute;right:277px;top:120px;height:15px;line-height:15px;white-space:nowrap;text-align:right;">y</div>
<div style="position:absolute;left:472px;width:33px;top:135px;height:14px;line-height:14px;white-space:nowrap;text-align:center;">1</div>
<div style="position:absolute;right:321px;top:135px;height:14px;line-height:14px;white-space:nowrap;text-align:right;">-40,0</div>
<div style="position:absolute;right:277px;top:135px;height:14px;line-height:14px;white-space:nowrap;text-align:right;">-40,0</div>
<div style="position:absolute;left:472px;width:33px;top:149px;height:14px;line-height:14px;white-space:nowrap;text-align:center;">2</div>
<div style="position:absolute;right:321px;top:149px;height:14px;line-height:14px;white-space:nowrap;text-align:right;">540,0</div>
<div style="position:absolute;right:277px;top:149px;height:14px;line-height:14px;white-space:nowrap;text-align:right;">-40,0</div>
<div style="position:absolute;left:472px;width:33px;top:163px;height:14px;line-height:14px;white-space:nowrap;text-align:center;">3</div>
<div style="position:absolute;right:321px;top:163px;height:14px;line-height:14px;white-space:nowrap;text-align:right;">540,0</div>
<div style="position:absolute;right:277px;top:163px;height:14px;line-height:14px;white-space:nowrap;text-align:right;">440,0</div>
<div style="position:absolute;left:472px;width:33px;top:177px;height:14px;line-height:14px;white-space:nowrap;text-align:center;">4</div>
<div style="position:absolute;right:321px;top:177px;height:14px;line-height:14px;white-space:nowrap;text-align:right;">360,0</div>
<div style="position:absolute;right:277px;top:177px;height:14px;line-height:14px;white-space:nowrap;text-align:right;">440,0</div>
<div style="position:absolute;left:472px;width:33px;top:191px;height:14px;line-height:14px;white-space:nowrap;text-align:center;">5</div>
<div style="position:absolute;right:321px;top:191px;height:14px;line-height:14px;white-space:nowrap;text-align:right;">360,0</div>
<div style="position:absolute;right:277px;top:191px;height:14px;line-height:14px;white-space:nowrap;text-align:right;">220,0</div>
<div style="position:absolute;left:472px;width:33px;top:205px;height:14px;line-height:14px;white-space:nowrap;text-align:center;">6</div>
<div style="position:absolute;right:321px;top:205px;height:14px;line-height:14px;white-space:nowrap;text-align:right;">140,0</div>
<div style="position:absolute;right:277px;top:205px;height:14px;line-height:14px;white-space:nowrap;text-align:right;">220,0</div>
<div style="position:absolute;left:472px;width:33px;top:219px;height:14px;line-height:14px;white-space:nowrap;text-align:center;">7</div>
<div style="position:absolute;right:321px;top:219px;height:14px;line-height:14px;white-space:nowrap;text-align:right;">140,0</div>
<div style="position:absolute;right:277px;top:219px;height:14px;line-height:14px;white-space:nowrap;text-align:right;">440,0</div>
<div style="position:absolute;left:472px;width:33px;top:233px;height:14px;line-height:14px;white-space:nowrap;text-align:center;">8</div>
<div style="position:absolute;right:321px;top:233px;height:14px;line-height:14px;white-space:nowrap;text-align:right;">-40,0</div>
<div style="position:absolute;right:277px;top:233px;height:14px;line-height:14px;white-space:nowrap;text-align:right;">440,0</div>
<svg style="left:463px;top:235px" width="7" height="10" viewBox="0 0 7 10"><path d="M0 0 L7 5 L0 10 Z" fill="#000"/></svg>
<div style="position:absolute;left:458px;top:262px;width:389px;height:108px;border-radius:6px 6px 0 0;overflow:hidden;background:#7B90DC;">
<div style="position:absolute;left:0;top:0;width:389px;height:30px;background:linear-gradient(to bottom,#7080C4 0px,#7080C4 1px,#A4B8F0 1px,#9CB2EE 3px,#8CA4E8 5px,#7C96DF 8px,#7A95DE 17px,#80A0EA 21px,#82A6EE 26px,#7898E0 28px,#6E86D0 30px);"></div>
<div style="position:absolute;left:0;top:30px;width:4px;height:78px;background:linear-gradient(to right,#6A78B8,#8A9EE4 1px,#8094E0 3px,#7488D8 4px);"></div>
<div style="position:absolute;left:385px;top:30px;width:4px;height:78px;background:linear-gradient(to right,#8094E0,#7C90DC 2px,#6A7CC8 3px,#5A6AB4 4px);"></div>
<div style="position:absolute;left:0;top:104px;width:389px;height:4px;background:linear-gradient(to bottom,#8094E0,#6E80CC 3px,#6A78B8 4px);"></div>
<svg style="left:5px;top:8px" width="16" height="15" viewBox="0 0 16 15"><rect x="2" y="8.6" width="12" height="5" fill="#98C4D0"/><rect x="6" y="0" width="4" height="6.5" rx="1.2" fill="#0A1A5A"/><rect x="7.2" y="1.8" width="1.6" height="4.5" fill="#78C0E8"/><rect x="0" y="5.8" width="16" height="3" fill="#06064A"/><rect x="1.5" y="6.9" width="13" height="0.9" fill="#B8C0F0"/><rect x="0" y="8.6" width="2" height="5.6" fill="#0A0A40"/><rect x="14" y="8.6" width="2" height="5.6" fill="#0A0A40"/><rect x="5" y="9" width="6.5" height="4.5" fill="#D88890"/><rect x="5" y="9" width="6.5" height="1.5" fill="#F0C0B8"/><rect x="0" y="13.6" width="16" height="1" fill="#1A6A50"/></svg>
<div style="position:absolute;left:25px;top:9px;height:16px;line-height:16px;white-space:nowrap;color:#DDE6FB;font-weight:bold;font-size:13.3px;">Pilastri</div>
</div>
<div style="position:absolute;left:820px;top:267px;width:21px;height:21px;border:1px solid #C4D0F4;border-radius:3px;background:linear-gradient(135deg,#D08090,#BC6474 60%,#B05A6A);">
<svg style="left:0;top:0" width="19" height="19"><path d="M5 5 L14 14 M14 5 L5 14" stroke="#fff" stroke-width="2"/></svg>
</div>
<div style="position:absolute;left:462px;top:292px;width:381px;height:75px;background:#FFFFFF;"></div>
<div style="position:absolute;left:462px;top:292px;width:377px;height:16px;background:#ECE9D8;"></div>
<div style="position:absolute;left:462px;top:292px;width:14px;height:72px;background:#ECE9D8;"></div>
<div style="position:absolute;left:476px;top:308px;width:33px;height:56px;background:#DDFBFB;"></div>
<div style="position:absolute;left:509px;top:308px;width:44px;height:56px;background:#E4E4FA;"></div>
<div style="position:absolute;left:553px;top:308px;width:44px;height:56px;background:#E4E4FA;"></div>
<div style="position:absolute;left:597px;top:308px;width:44px;height:56px;background:#E4E4FA;"></div>
<div style="position:absolute;left:641px;top:308px;width:33px;height:56px;background:#E4E4FA;"></div>
<div style="position:absolute;left:674px;top:308px;width:33px;height:56px;background:#E4E4FA;"></div>
<div style="position:absolute;left:707px;top:308px;width:44px;height:56px;background:#F9F8F3;"></div>
<div style="position:absolute;left:751px;top:308px;width:44px;height:56px;background:#DDFBFB;"></div>
<div style="position:absolute;left:795px;top:308px;width:44px;height:56px;background:#EEFBFF;"></div>
<div style="position:absolute;left:476px;top:322px;width:363px;height:1px;background:#C9C9C2;"></div>
<div style="position:absolute;left:476px;top:336px;width:363px;height:1px;background:#C9C9C2;"></div>
<div style="position:absolute;left:476px;top:350px;width:363px;height:1px;background:#C9C9C2;"></div>
<div style="position:absolute;left:476px;top:364px;width:363px;height:1px;background:#C9C9C2;"></div>
<div style="position:absolute;left:509px;top:308px;width:1px;height:56px;background:#C9C9C2;"></div>
<div style="position:absolute;left:553px;top:308px;width:1px;height:56px;background:#C9C9C2;"></div>
<div style="position:absolute;left:597px;top:308px;width:1px;height:56px;background:#C9C9C2;"></div>
<div style="position:absolute;left:641px;top:308px;width:1px;height:56px;background:#C9C9C2;"></div>
<div style="position:absolute;left:674px;top:308px;width:1px;height:56px;background:#C9C9C2;"></div>
<div style="position:absolute;left:707px;top:308px;width:1px;height:56px;background:#C9C9C2;"></div>
<div style="position:absolute;left:751px;top:308px;width:1px;height:56px;background:#C9C9C2;"></div>
<div style="position:absolute;left:795px;top:308px;width:1px;height:56px;background:#C9C9C2;"></div>
<div style="position:absolute;left:839px;top:308px;width:1px;height:56px;background:#C9C9C2;"></div>
<div style="position:absolute;left:462px;top:292px;width:378px;height:1px;background:#6F6F6F;"></div>
<div style="position:absolute;left:462px;top:292px;width:1px;height:73px;background:#6F6F6F;"></div>
<div style="position:absolute;left:462px;top:308px;width:378px;height:1px;background:#6F6F6F;"></div>
<div style="position:absolute;left:476px;top:292px;width:1px;height:16px;background:#6F6F6F;"></div>
<div style="position:absolute;left:509px;top:292px;width:1px;height:16px;background:#6F6F6F;"></div>
<div style="position:absolute;left:553px;top:292px;width:1px;height:16px;background:#6F6F6F;"></div>
<div style="position:absolute;left:597px;top:292px;width:1px;height:16px;background:#6F6F6F;"></div>
<div style="position:absolute;left:641px;top:292px;width:1px;height:16px;background:#6F6F6F;"></div>
<div style="position:absolute;left:674px;top:292px;width:1px;height:16px;background:#6F6F6F;"></div>
<div style="position:absolute;left:707px;top:292px;width:1px;height:16px;background:#6F6F6F;"></div>
<div style="position:absolute;left:751px;top:292px;width:1px;height:16px;background:#6F6F6F;"></div>
<div style="position:absolute;left:795px;top:292px;width:1px;height:16px;background:#6F6F6F;"></div>
<div style="position:absolute;left:839px;top:292px;width:1px;height:16px;background:#6F6F6F;"></div>
<div style="position:absolute;left:476px;top:292px;width:1px;height:73px;background:#6F6F6F;"></div>
<div style="position:absolute;left:462px;top:322px;width:14px;height:1px;background:#6F6F6F;"></div>
<div style="position:absolute;left:462px;top:336px;width:14px;height:1px;background:#6F6F6F;"></div>
<div style="position:absolute;left:462px;top:350px;width:14px;height:1px;background:#6F6F6F;"></div>
<div style="position:absolute;left:462px;top:364px;width:14px;height:1px;background:#6F6F6F;"></div>
<div style="position:absolute;left:463px;top:293px;width:13px;height:1px;background:#FAF9F4;"></div>
<div style="position:absolute;left:463px;top:293px;width:1px;height:15px;background:#FAF9F4;"></div>
<div style="position:absolute;left:477px;top:293px;width:32px;height:1px;background:#FAF9F4;"></div>
<div style="position:absolute;left:477px;top:293px;width:1px;height:15px;background:#FAF9F4;"></div>
<div style="position:absolute;left:510px;top:293px;width:43px;height:1px;background:#FAF9F4;"></div>
<div style="position:absolute;left:510px;top:293px;width:1px;height:15px;background:#FAF9F4;"></div>
<div style="position:absolute;left:554px;top:293px;width:43px;height:1px;background:#FAF9F4;"></div>
<div style="position:absolute;left:554px;top:293px;width:1px;height:15px;background:#FAF9F4;"></div>
<div style="position:absolute;left:598px;top:293px;width:43px;height:1px;background:#FAF9F4;"></div>
<div style="position:absolute;left:598px;top:293px;width:1px;height:15px;background:#FAF9F4;"></div>
<div style="position:absolute;left:642px;top:293px;width:32px;height:1px;background:#FAF9F4;"></div>
<div style="position:absolute;left:642px;top:293px;width:1px;height:15px;background:#FAF9F4;"></div>
<div style="position:absolute;left:675px;top:293px;width:32px;height:1px;background:#FAF9F4;"></div>
<div style="position:absolute;left:675px;top:293px;width:1px;height:15px;background:#FAF9F4;"></div>
<div style="position:absolute;left:708px;top:293px;width:43px;height:1px;background:#FAF9F4;"></div>
<div style="position:absolute;left:708px;top:293px;width:1px;height:15px;background:#FAF9F4;"></div>
<div style="position:absolute;left:752px;top:293px;width:43px;height:1px;background:#FAF9F4;"></div>
<div style="position:absolute;left:752px;top:293px;width:1px;height:15px;background:#FAF9F4;"></div>
<div style="position:absolute;left:796px;top:293px;width:43px;height:1px;background:#FAF9F4;"></div>
<div style="position:absolute;left:796px;top:293px;width:1px;height:15px;background:#FAF9F4;"></div>
<div style="position:absolute;left:463px;top:309px;width:1px;height:13px;background:#FAF9F4;"></div>
<div style="position:absolute;left:463px;top:309px;width:13px;height:1px;background:#FAF9F4;"></div>
<div style="position:absolute;left:463px;top:323px;width:1px;height:13px;background:#FAF9F4;"></div>
<div style="position:absolute;left:463px;top:323px;width:13px;height:1px;background:#FAF9F4;"></div>
<div style="position:absolute;left:463px;top:337px;width:1px;height:13px;background:#FAF9F4;"></div>
<div style="position:absolute;left:463px;top:337px;width:13px;height:1px;background:#FAF9F4;"></div>
<div style="position:absolute;left:463px;top:351px;width:1px;height:13px;background:#FAF9F4;"></div>
<div style="position:absolute;left:463px;top:351px;width:13px;height:1px;background:#FAF9F4;"></div>
<div style="position:absolute;left:476px;width:33px;top:293px;height:16px;line-height:16px;white-space:nowrap;text-align:center;">pil</div>
<div style="position:absolute;right:317px;top:293px;height:16px;line-height:16px;white-space:nowrap;text-align:right;">x</div>
<div style="position:absolute;right:273px;top:293px;height:16px;line-height:16px;white-space:nowrap;text-align:right;">y</div>
<div style="position:absolute;right:229px;top:293px;height:16px;line-height:16px;white-space:nowrap;text-align:right;">b</div>
<div style="position:absolute;right:196px;top:293px;height:16px;line-height:16px;white-space:nowrap;text-align:right;">h</div>
<div style="position:absolute;right:163px;top:293px;height:16px;line-height:16px;white-space:nowrap;text-align:right;">l</div>
<div style="position:absolute;right:119px;top:293px;height:16px;line-height:16px;white-space:nowrap;text-align:right;">r</div>
<div style="position:absolute;left:751px;width:44px;top:293px;height:16px;line-height:16px;white-space:nowrap;text-align:center;">jed</div>
<div style="position:absolute;left:799px;top:293px;height:16px;line-height:16px;white-space:nowrap;">pqp</div>
<div style="position:absolute;left:476px;width:33px;top:309px;height:14px;line-height:14px;white-space:nowrap;text-align:center;">1</div>
<div style="position:absolute;right:317px;top:309px;height:14px;line-height:14px;white-space:nowrap;text-align:right;">50,0</div>
<div style="position:absolute;right:273px;top:309px;height:14px;line-height:14px;white-space:nowrap;text-align:right;">20,0</div>
<div style="position:absolute;right:229px;top:309px;height:14px;line-height:14px;white-space:nowrap;text-align:right;">40</div>
<div style="position:absolute;right:196px;top:309px;height:14px;line-height:14px;white-space:nowrap;text-align:right;">80</div>
<div style="position:absolute;right:163px;top:309px;height:14px;line-height:14px;white-space:nowrap;text-align:right;">100</div>
<div style="position:absolute;right:119px;top:309px;height:14px;line-height:14px;white-space:nowrap;text-align:right;">0,0</div>
<div style="position:absolute;left:751px;width:44px;top:309px;height:14px;line-height:14px;white-space:nowrap;text-align:center;">0</div>
<div style="position:absolute;left:799px;top:309px;height:14px;line-height:14px;white-space:nowrap;">2H</div>
<div style="position:absolute;left:827px;top:310px;width:11px;height:12px;background:#ECE9D8;opacity:0.55;"></div>
<svg style="left:829px;top:315px" width="6" height="3" viewBox="0 0 6 3"><path d="M0 0 H6 L3 3 Z" fill="#000"/></svg>
<div style="position:absolute;left:476px;width:33px;top:323px;height:14px;line-height:14px;white-space:nowrap;text-align:center;">2</div>
<div style="position:absolute;right:317px;top:323px;height:14px;line-height:14px;white-space:nowrap;text-align:right;">450,0</div>
<div style="position:absolute;right:273px;top:323px;height:14px;line-height:14px;white-space:nowrap;text-align:right;">20,0</div>
<div style="position:absolute;right:229px;top:323px;height:14px;line-height:14px;white-space:nowrap;text-align:right;">40</div>
<div style="position:absolute;right:196px;top:323px;height:14px;line-height:14px;white-space:nowrap;text-align:right;">80</div>
<div style="position:absolute;right:163px;top:323px;height:14px;line-height:14px;white-space:nowrap;text-align:right;">100</div>
<div style="position:absolute;right:119px;top:323px;height:14px;line-height:14px;white-space:nowrap;text-align:right;">0,0</div>
<div style="position:absolute;left:751px;width:44px;top:323px;height:14px;line-height:14px;white-space:nowrap;text-align:center;">0</div>
<div style="position:absolute;left:799px;top:323px;height:14px;line-height:14px;white-space:nowrap;">2H</div>
<div style="position:absolute;left:827px;top:324px;width:11px;height:12px;background:#ECE9D8;opacity:0.55;"></div>
<svg style="left:829px;top:329px" width="6" height="3" viewBox="0 0 6 3"><path d="M0 0 H6 L3 3 Z" fill="#000"/></svg>
<div style="position:absolute;left:476px;width:33px;top:337px;height:14px;line-height:14px;white-space:nowrap;text-align:center;">3</div>
<div style="position:absolute;right:317px;top:337px;height:14px;line-height:14px;white-space:nowrap;text-align:right;">50,0</div>
<div style="position:absolute;right:273px;top:337px;height:14px;line-height:14px;white-space:nowrap;text-align:right;">380,0</div>
<div style="position:absolute;right:229px;top:337px;height:14px;line-height:14px;white-space:nowrap;text-align:right;">40</div>
<div style="position:absolute;right:196px;top:337px;height:14px;line-height:14px;white-space:nowrap;text-align:right;">80</div>
<div style="position:absolute;right:163px;top:337px;height:14px;line-height:14px;white-space:nowrap;text-align:right;">100</div>
<div style="position:absolute;right:119px;top:337px;height:14px;line-height:14px;white-space:nowrap;text-align:right;">0,0</div>
<div style="position:absolute;left:751px;width:44px;top:337px;height:14px;line-height:14px;white-space:nowrap;text-align:center;">0</div>
<div style="position:absolute;left:799px;top:337px;height:14px;line-height:14px;white-space:nowrap;">2H</div>
<div style="position:absolute;left:827px;top:338px;width:11px;height:12px;background:#ECE9D8;opacity:0.55;"></div>
<svg style="left:829px;top:343px" width="6" height="3" viewBox="0 0 6 3"><path d="M0 0 H6 L3 3 Z" fill="#000"/></svg>
<div style="position:absolute;left:476px;width:33px;top:351px;height:14px;line-height:14px;white-space:nowrap;text-align:center;">4</div>
<div style="position:absolute;right:317px;top:351px;height:14px;line-height:14px;white-space:nowrap;text-align:right;">450,0</div>
<div style="position:absolute;right:273px;top:351px;height:14px;line-height:14px;white-space:nowrap;text-align:right;">380,0</div>
<div style="position:absolute;right:229px;top:351px;height:14px;line-height:14px;white-space:nowrap;text-align:right;">40</div>
<div style="position:absolute;right:196px;top:351px;height:14px;line-height:14px;white-space:nowrap;text-align:right;">80</div>
<div style="position:absolute;right:163px;top:351px;height:14px;line-height:14px;white-space:nowrap;text-align:right;">100</div>
<div style="position:absolute;right:119px;top:351px;height:14px;line-height:14px;white-space:nowrap;text-align:right;">0,0</div>
<div style="position:absolute;left:751px;width:44px;top:351px;height:14px;line-height:14px;white-space:nowrap;text-align:center;">0</div>
<div style="position:absolute;left:799px;top:351px;height:14px;line-height:14px;white-space:nowrap;">2H</div>
<div style="position:absolute;left:827px;top:352px;width:11px;height:12px;background:#ECE9D8;opacity:0.55;"></div>
<svg style="left:829px;top:357px" width="6" height="3" viewBox="0 0 6 3"><path d="M0 0 H6 L3 3 Z" fill="#000"/></svg>
<svg style="left:467px;top:353px" width="7" height="10" viewBox="0 0 7 10"><path d="M0 0 L7 5 L0 10 Z" fill="#000"/></svg>
<div style="position:absolute;left:16px;top:531px;width:522px;height:108px;border-radius:6px 6px 0 0;overflow:hidden;background:#7B90DC;">
<div style="position:absolute;left:0;top:0;width:522px;height:30px;background:linear-gradient(to bottom,#7080C4 0px,#7080C4 1px,#A4B8F0 1px,#9CB2EE 3px,#8CA4E8 5px,#7C96DF 8px,#7A95DE 17px,#80A0EA 21px,#82A6EE 26px,#7898E0 28px,#6E86D0 30px);"></div>
<div style="position:absolute;left:0;top:30px;width:4px;height:78px;background:linear-gradient(to right,#6A78B8,#8A9EE4 1px,#8094E0 3px,#7488D8 4px);"></div>
<div style="position:absolute;left:518px;top:30px;width:4px;height:78px;background:linear-gradient(to right,#8094E0,#7C90DC 2px,#6A7CC8 3px,#5A6AB4 4px);"></div>
<div style="position:absolute;left:0;top:104px;width:522px;height:4px;background:linear-gradient(to bottom,#8094E0,#6E80CC 3px,#6A78B8 4px);"></div>
<svg style="left:5px;top:8px" width="16" height="15" viewBox="0 0 16 15"><rect x="2" y="8.6" width="12" height="5" fill="#98C4D0"/><rect x="6" y="0" width="4" height="6.5" rx="1.2" fill="#0A1A5A"/><rect x="7.2" y="1.8" width="1.6" height="4.5" fill="#78C0E8"/><rect x="0" y="5.8" width="16" height="3" fill="#06064A"/><rect x="1.5" y="6.9" width="13" height="0.9" fill="#B8C0F0"/><rect x="0" y="8.6" width="2" height="5.6" fill="#0A0A40"/><rect x="14" y="8.6" width="2" height="5.6" fill="#0A0A40"/><rect x="5" y="9" width="6.5" height="4.5" fill="#D88890"/><rect x="5" y="9" width="6.5" height="1.5" fill="#F0C0B8"/><rect x="0" y="13.6" width="16" height="1" fill="#1A6A50"/></svg>
<div style="position:absolute;left:25px;top:9px;height:16px;line-height:16px;white-space:nowrap;color:#DDE6FB;font-weight:bold;font-size:13.3px;">Pali</div>
</div>
<div style="position:absolute;left:511px;top:536px;width:21px;height:21px;border:1px solid #C4D0F4;border-radius:3px;background:linear-gradient(135deg,#D08090,#BC6474 60%,#B05A6A);">
<svg style="left:0;top:0" width="19" height="19"><path d="M5 5 L14 14 M14 5 L5 14" stroke="#fff" stroke-width="2"/></svg>
</div>
<div style="position:absolute;left:21px;top:561px;width:513px;height:74px;background:#FFFFFF;"></div>
<div style="position:absolute;left:21px;top:561px;width:509px;height:15px;background:#ECE9D8;"></div>
<div style="position:absolute;left:21px;top:561px;width:14px;height:71px;background:#ECE9D8;"></div>
<div style="position:absolute;left:35px;top:576px;width:33px;height:56px;background:#DDFBFB;"></div>
<div style="position:absolute;left:68px;top:576px;width:44px;height:56px;background:#E4E4FA;"></div>
<div style="position:absolute;left:112px;top:576px;width:44px;height:56px;background:#E4E4FA;"></div>
<div style="position:absolute;left:156px;top:576px;width:44px;height:56px;background:#E4E4FA;"></div>
<div style="position:absolute;left:200px;top:576px;width:44px;height:56px;background:#E4E4FA;"></div>
<div style="position:absolute;left:244px;top:576px;width:66px;height:56px;background:#EEFBFF;"></div>
<div style="position:absolute;left:310px;top:576px;width:66px;height:56px;background:#EEFBFF;"></div>
<div style="position:absolute;left:376px;top:576px;width:22px;height:56px;background:#F9F8F3;"></div>
<div style="position:absolute;left:398px;top:576px;width:44px;height:56px;background:#E6F9E2;"></div>
<div style="position:absolute;left:442px;top:576px;width:44px;height:56px;background:#E6F9E2;"></div>
<div style="position:absolute;left:486px;top:576px;width:44px;height:56px;background:#EEFBFF;"></div>
<div style="position:absolute;left:35px;top:590px;width:495px;height:1px;background:#C9C9C2;"></div>
<div style="position:absolute;left:35px;top:604px;width:495px;height:1px;background:#C9C9C2;"></div>
<div style="position:absolute;left:35px;top:618px;width:495px;height:1px;background:#C9C9C2;"></div>
<div style="position:absolute;left:35px;top:632px;width:495px;height:1px;background:#C9C9C2;"></div>
<div style="position:absolute;left:68px;top:576px;width:1px;height:56px;background:#C9C9C2;"></div>
<div style="position:absolute;left:112px;top:576px;width:1px;height:56px;background:#C9C9C2;"></div>
<div style="position:absolute;left:156px;top:576px;width:1px;height:56px;background:#C9C9C2;"></div>
<div style="position:absolute;left:200px;top:576px;width:1px;height:56px;background:#C9C9C2;"></div>
<div style="position:absolute;left:244px;top:576px;width:1px;height:56px;background:#C9C9C2;"></div>
<div style="position:absolute;left:310px;top:576px;width:1px;height:56px;background:#C9C9C2;"></div>
<div style="position:absolute;left:376px;top:576px;width:1px;height:56px;background:#C9C9C2;"></div>
<div style="position:absolute;left:398px;top:576px;width:1px;height:56px;background:#C9C9C2;"></div>
<div style="position:absolute;left:442px;top:576px;width:1px;height:56px;background:#C9C9C2;"></div>
<div style="position:absolute;left:486px;top:576px;width:1px;height:56px;background:#C9C9C2;"></div>
<div style="position:absolute;left:530px;top:576px;width:1px;height:56px;background:#C9C9C2;"></div>
<div style="position:absolute;left:21px;top:561px;width:510px;height:1px;background:#6F6F6F;"></div>
<div style="position:absolute;left:21px;top:561px;width:1px;height:72px;background:#6F6F6F;"></div>
<div style="position:absolute;left:21px;top:576px;width:510px;height:1px;background:#6F6F6F;"></div>
<div style="position:absolute;left:35px;top:561px;width:1px;height:15px;background:#6F6F6F;"></div>
<div style="position:absolute;left:68px;top:561px;width:1px;height:15px;background:#6F6F6F;"></div>
<div style="position:absolute;left:112px;top:561px;width:1px;height:15px;background:#6F6F6F;"></div>
<div style="position:absolute;left:156px;top:561px;width:1px;height:15px;background:#6F6F6F;"></div>
<div style="position:absolute;left:200px;top:561px;width:1px;height:15px;background:#6F6F6F;"></div>
<div style="position:absolute;left:244px;top:561px;width:1px;height:15px;background:#6F6F6F;"></div>
<div style="position:absolute;left:310px;top:561px;width:1px;height:15px;background:#6F6F6F;"></div>
<div style="position:absolute;left:376px;top:561px;width:1px;height:15px;background:#6F6F6F;"></div>
<div style="position:absolute;left:398px;top:561px;width:1px;height:15px;background:#6F6F6F;"></div>
<div style="position:absolute;left:442px;top:561px;width:1px;height:15px;background:#6F6F6F;"></div>
<div style="position:absolute;left:486px;top:561px;width:1px;height:15px;background:#6F6F6F;"></div>
<div style="position:absolute;left:530px;top:561px;width:1px;height:15px;background:#6F6F6F;"></div>
<div style="position:absolute;left:35px;top:561px;width:1px;height:72px;background:#6F6F6F;"></div>
<div style="position:absolute;left:21px;top:590px;width:14px;height:1px;background:#6F6F6F;"></div>
<div style="position:absolute;left:21px;top:604px;width:14px;height:1px;background:#6F6F6F;"></div>
<div style="position:absolute;left:21px;top:618px;width:14px;height:1px;background:#6F6F6F;"></div>
<div style="position:absolute;left:21px;top:632px;width:14px;height:1px;background:#6F6F6F;"></div>
<div style="position:absolute;left:22px;top:562px;width:13px;height:1px;background:#FAF9F4;"></div>
<div style="position:absolute;left:22px;top:562px;width:1px;height:14px;background:#FAF9F4;"></div>
<div style="position:absolute;left:36px;top:562px;width:32px;height:1px;background:#FAF9F4;"></div>
<div style="position:absolute;left:36px;top:562px;width:1px;height:14px;background:#FAF9F4;"></div>
<div style="position:absolute;left:69px;top:562px;width:43px;height:1px;background:#FAF9F4;"></div>
<div style="position:absolute;left:69px;top:562px;width:1px;height:14px;background:#FAF9F4;"></div>
<div style="position:absolute;left:113px;top:562px;width:43px;height:1px;background:#FAF9F4;"></div>
<div style="position:absolute;left:113px;top:562px;width:1px;height:14px;background:#FAF9F4;"></div>
<div style="position:absolute;left:157px;top:562px;width:43px;height:1px;background:#FAF9F4;"></div>
<div style="position:absolute;left:157px;top:562px;width:1px;height:14px;background:#FAF9F4;"></div>
<div style="position:absolute;left:201px;top:562px;width:43px;height:1px;background:#FAF9F4;"></div>
<div style="position:absolute;left:201px;top:562px;width:1px;height:14px;background:#FAF9F4;"></div>
<div style="position:absolute;left:245px;top:562px;width:65px;height:1px;background:#FAF9F4;"></div>
<div style="position:absolute;left:245px;top:562px;width:1px;height:14px;background:#FAF9F4;"></div>
<div style="position:absolute;left:311px;top:562px;width:65px;height:1px;background:#FAF9F4;"></div>
<div style="position:absolute;left:311px;top:562px;width:1px;height:14px;background:#FAF9F4;"></div>
<div style="position:absolute;left:377px;top:562px;width:21px;height:1px;background:#FAF9F4;"></div>
<div style="position:absolute;left:377px;top:562px;width:1px;height:14px;background:#FAF9F4;"></div>
<div style="position:absolute;left:399px;top:562px;width:43px;height:1px;background:#FAF9F4;"></div>
<div style="position:absolute;left:399px;top:562px;width:1px;height:14px;background:#FAF9F4;"></div>
<div style="position:absolute;left:443px;top:562px;width:43px;height:1px;background:#FAF9F4;"></div>
<div style="position:absolute;left:443px;top:562px;width:1px;height:14px;background:#FAF9F4;"></div>
<div style="position:absolute;left:487px;top:562px;width:43px;height:1px;background:#FAF9F4;"></div>
<div style="position:absolute;left:487px;top:562px;width:1px;height:14px;background:#FAF9F4;"></div>
<div style="position:absolute;left:22px;top:577px;width:1px;height:13px;background:#FAF9F4;"></div>
<div style="position:absolute;left:22px;top:577px;width:13px;height:1px;background:#FAF9F4;"></div>
<div style="position:absolute;left:22px;top:591px;width:1px;height:13px;background:#FAF9F4;"></div>
<div style="position:absolute;left:22px;top:591px;width:13px;height:1px;background:#FAF9F4;"></div>
<div style="position:absolute;left:22px;top:605px;width:1px;height:13px;background:#FAF9F4;"></div>
<div style="position:absolute;left:22px;top:605px;width:13px;height:1px;background:#FAF9F4;"></div>
<div style="position:absolute;left:22px;top:619px;width:1px;height:13px;background:#FAF9F4;"></div>
<div style="position:absolute;left:22px;top:619px;width:13px;height:1px;background:#FAF9F4;"></div>
<div style="position:absolute;left:35px;width:33px;top:562px;height:15px;line-height:15px;white-space:nowrap;text-align:center;">pal</div>
<div style="position:absolute;right:758px;top:562px;height:15px;line-height:15px;white-space:nowrap;text-align:right;">x</div>
<div style="position:absolute;right:714px;top:562px;height:15px;line-height:15px;white-space:nowrap;text-align:right;">y</div>
<div style="position:absolute;right:670px;top:562px;height:15px;line-height:15px;white-space:nowrap;text-align:right;">d</div>
<div style="position:absolute;right:626px;top:562px;height:15px;line-height:15px;white-space:nowrap;text-align:right;">l</div>
<div style="position:absolute;right:560px;top:562px;height:15px;line-height:15px;white-space:nowrap;text-align:right;">cls</div>
<div style="position:absolute;right:494px;top:562px;height:15px;line-height:15px;white-space:nowrap;text-align:right;">fer</div>
<div style="position:absolute;left:376px;width:22px;top:562px;height:15px;line-height:15px;white-space:nowrap;text-align:center;">*</div>
<div style="position:absolute;right:428px;top:562px;height:15px;line-height:15px;white-space:nowrap;text-align:right;">Qd+</div>
<div style="position:absolute;right:384px;top:562px;height:15px;line-height:15px;white-space:nowrap;text-align:right;">Qd-</div>
<div style="position:absolute;left:490px;top:562px;height:15px;line-height:15px;white-space:nowrap;">pqp</div>
<div style="position:absolute;left:35px;width:33px;top:577px;height:14px;line-height:14px;white-space:nowrap;text-align:center;">1</div>
<div style="position:absolute;right:758px;top:577px;height:14px;line-height:14px;white-space:nowrap;text-align:right;">50,0</div>
<div style="position:absolute;right:714px;top:577px;height:14px;line-height:14px;white-space:nowrap;text-align:right;">20,0</div>
<div style="position:absolute;right:670px;top:577px;height:14px;line-height:14px;white-space:nowrap;text-align:right;">80</div>
<div style="position:absolute;right:626px;top:577px;height:14px;line-height:14px;white-space:nowrap;text-align:right;">2000</div>
<div style="position:absolute;right:574px;top:577px;height:14px;line-height:14px;white-space:nowrap;text-align:right;">Rck250</div>
<div style="position:absolute;right:508px;top:577px;height:14px;line-height:14px;white-space:nowrap;text-align:right;">FeB44K</div>
<div style="position:absolute;left:490px;top:577px;height:14px;line-height:14px;white-space:nowrap;">8H</div>
<div style="position:absolute;left:298px;top:578px;width:11px;height:12px;background:#ECE9D8;opacity:0.55;"></div>
<svg style="left:300px;top:583px" width="6" height="3" viewBox="0 0 6 3"><path d="M0 0 H6 L3 3 Z" fill="#000"/></svg>
<div style="position:absolute;left:364px;top:578px;width:11px;height:12px;background:#ECE9D8;opacity:0.55;"></div>
<svg style="left:366px;top:583px" width="6" height="3" viewBox="0 0 6 3"><path d="M0 0 H6 L3 3 Z" fill="#000"/></svg>
<div style="position:absolute;left:518px;top:578px;width:11px;height:12px;background:#ECE9D8;opacity:0.55;"></div>
<svg style="left:520px;top:583px" width="6" height="3" viewBox="0 0 6 3"><path d="M0 0 H6 L3 3 Z" fill="#000"/></svg>
<div style="position:absolute;left:381px;top:578px;width:11px;height:11px;background:#fff;border-top:2px solid #7A7A7A;border-left:2px solid #7A7A7A;border-right:1px solid #EEEEEE;border-bottom:1px solid #EEEEEE;"></div>
<div style="position:absolute;left:35px;width:33px;top:591px;height:14px;line-height:14px;white-space:nowrap;text-align:center;">2</div>
<div style="position:absolute;right:758px;top:591px;height:14px;line-height:14px;white-space:nowrap;text-align:right;">450,0</div>
<div style="position:absolute;right:714px;top:591px;height:14px;line-height:14px;white-space:nowrap;text-align:right;">20,0</div>
<div style="position:absolute;right:670px;top:591px;height:14px;line-height:14px;white-space:nowrap;text-align:right;">80</div>
<div style="position:absolute;right:626px;top:591px;height:14px;line-height:14px;white-space:nowrap;text-align:right;">2000</div>
<div style="position:absolute;right:574px;top:591px;height:14px;line-height:14px;white-space:nowrap;text-align:right;">Rck250</div>
<div style="position:absolute;right:508px;top:591px;height:14px;line-height:14px;white-space:nowrap;text-align:right;">FeB44K</div>
<div style="position:absolute;left:490px;top:591px;height:14px;line-height:14px;white-space:nowrap;">8H</div>
<div style="position:absolute;left:298px;top:592px;width:11px;height:12px;background:#ECE9D8;opacity:0.55;"></div>
<svg style="left:300px;top:597px" width="6" height="3" viewBox="0 0 6 3"><path d="M0 0 H6 L3 3 Z" fill="#000"/></svg>
<div style="position:absolute;left:364px;top:592px;width:11px;height:12px;background:#ECE9D8;opacity:0.55;"></div>
<svg style="left:366px;top:597px" width="6" height="3" viewBox="0 0 6 3"><path d="M0 0 H6 L3 3 Z" fill="#000"/></svg>
<div style="position:absolute;left:518px;top:592px;width:11px;height:12px;background:#ECE9D8;opacity:0.55;"></div>
<svg style="left:520px;top:597px" width="6" height="3" viewBox="0 0 6 3"><path d="M0 0 H6 L3 3 Z" fill="#000"/></svg>
<div style="position:absolute;left:381px;top:592px;width:11px;height:11px;background:#fff;border-top:2px solid #7A7A7A;border-left:2px solid #7A7A7A;border-right:1px solid #EEEEEE;border-bottom:1px solid #EEEEEE;"></div>
<div style="position:absolute;left:35px;width:33px;top:605px;height:14px;line-height:14px;white-space:nowrap;text-align:center;">3</div>
<div style="position:absolute;right:758px;top:605px;height:14px;line-height:14px;white-space:nowrap;text-align:right;">50,0</div>
<div style="position:absolute;right:714px;top:605px;height:14px;line-height:14px;white-space:nowrap;text-align:right;">380,0</div>
<div style="position:absolute;right:670px;top:605px;height:14px;line-height:14px;white-space:nowrap;text-align:right;">80</div>
<div style="position:absolute;right:626px;top:605px;height:14px;line-height:14px;white-space:nowrap;text-align:right;">2000</div>
<div style="position:absolute;right:574px;top:605px;height:14px;line-height:14px;white-space:nowrap;text-align:right;">Rck250</div>
<div style="position:absolute;right:508px;top:605px;height:14px;line-height:14px;white-space:nowrap;text-align:right;">FeB44K</div>
<div style="position:absolute;left:490px;top:605px;height:14px;line-height:14px;white-space:nowrap;">8H</div>
<div style="position:absolute;left:298px;top:606px;width:11px;height:12px;background:#ECE9D8;opacity:0.55;"></div>
<svg style="left:300px;top:611px" width="6" height="3" viewBox="0 0 6 3"><path d="M0 0 H6 L3 3 Z" fill="#000"/></svg>
<div style="position:absolute;left:364px;top:606px;width:11px;height:12px;background:#ECE9D8;opacity:0.55;"></div>
<svg style="left:366px;top:611px" width="6" height="3" viewBox="0 0 6 3"><path d="M0 0 H6 L3 3 Z" fill="#000"/></svg>
<div style="position:absolute;left:518px;top:606px;width:11px;height:12px;background:#ECE9D8;opacity:0.55;"></div>
<svg style="left:520px;top:611px" width="6" height="3" viewBox="0 0 6 3"><path d="M0 0 H6 L3 3 Z" fill="#000"/></svg>
<div style="position:absolute;left:381px;top:606px;width:11px;height:11px;background:#fff;border-top:2px solid #7A7A7A;border-left:2px solid #7A7A7A;border-right:1px solid #EEEEEE;border-bottom:1px solid #EEEEEE;"></div>
<div style="position:absolute;left:35px;width:33px;top:619px;height:14px;line-height:14px;white-space:nowrap;text-align:center;">4</div>
<div style="position:absolute;right:758px;top:619px;height:14px;line-height:14px;white-space:nowrap;text-align:right;">450,0</div>
<div style="position:absolute;right:714px;top:619px;height:14px;line-height:14px;white-space:nowrap;text-align:right;">380,0</div>
<div style="position:absolute;right:670px;top:619px;height:14px;line-height:14px;white-space:nowrap;text-align:right;">80</div>
<div style="position:absolute;right:626px;top:619px;height:14px;line-height:14px;white-space:nowrap;text-align:right;">2000</div>
<div style="position:absolute;right:574px;top:619px;height:14px;line-height:14px;white-space:nowrap;text-align:right;">Rck250</div>
<div style="position:absolute;right:508px;top:619px;height:14px;line-height:14px;white-space:nowrap;text-align:right;">FeB44K</div>
<div style="position:absolute;left:490px;top:619px;height:14px;line-height:14px;white-space:nowrap;">8H</div>
<div style="position:absolute;left:298px;top:620px;width:11px;height:12px;background:#ECE9D8;opacity:0.55;"></div>
<svg style="left:300px;top:625px" width="6" height="3" viewBox="0 0 6 3"><path d="M0 0 H6 L3 3 Z" fill="#000"/></svg>
<div style="position:absolute;left:364px;top:620px;width:11px;height:12px;background:#ECE9D8;opacity:0.55;"></div>
<svg style="left:366px;top:625px" width="6" height="3" viewBox="0 0 6 3"><path d="M0 0 H6 L3 3 Z" fill="#000"/></svg>
<div style="position:absolute;left:518px;top:620px;width:11px;height:12px;background:#ECE9D8;opacity:0.55;"></div>
<svg style="left:520px;top:625px" width="6" height="3" viewBox="0 0 6 3"><path d="M0 0 H6 L3 3 Z" fill="#000"/></svg>
<div style="position:absolute;left:381px;top:620px;width:11px;height:11px;background:#fff;border-top:2px solid #7A7A7A;border-left:2px solid #7A7A7A;border-right:1px solid #EEEEEE;border-bottom:1px solid #EEEEEE;"></div>
<svg style="left:26px;top:621px" width="7" height="10" viewBox="0 0 7 10"><path d="M0 0 L7 5 L0 10 Z" fill="#000"/></svg>
<div style="position:absolute;left:20px;top:640px;width:463px;height:80px;border-radius:6px 6px 0 0;overflow:hidden;background:#0A3FD0;">
<div style="position:absolute;left:0;top:0;width:463px;height:30px;background:linear-gradient(to bottom,#1C50D8 0px,#3D8CFF 1px,#3A86FA 3px,#0A62E8 4px,#0056E2 6px,#0050DE 14px,#0058E8 19px,#0064F8 22px,#0066FB 26px,#0050D8 28px,#0038B0 30px);"></div>
<div style="position:absolute;left:0;top:30px;width:4px;height:50px;background:linear-gradient(to right,#0030B8,#0C52E8 2px,#0A48DC 4px);"></div>
<div style="position:absolute;left:459px;top:30px;width:4px;height:50px;background:linear-gradient(to right,#0A48DC,#0030B8 3px,#002898 4px);"></div>
<div style="position:absolute;left:0;top:76px;width:463px;height:4px;background:linear-gradient(to bottom,#0A48DC,#0030B8 3px,#002898 4px);"></div>
<svg style="left:5px;top:8px" width="16" height="15" viewBox="0 0 16 15"><rect x="2" y="8.6" width="12" height="5" fill="#98C4D0"/><rect x="6" y="0" width="4" height="6.5" rx="1.2" fill="#0A1A5A"/><rect x="7.2" y="1.8" width="1.6" height="4.5" fill="#78C0E8"/><rect x="0" y="5.8" width="16" height="3" fill="#06064A"/><rect x="1.5" y="6.9" width="13" height="0.9" fill="#B8C0F0"/><rect x="0" y="8.6" width="2" height="5.6" fill="#0A0A40"/><rect x="14" y="8.6" width="2" height="5.6" fill="#0A0A40"/><rect x="5" y="9" width="6.5" height="4.5" fill="#D88890"/><rect x="5" y="9" width="6.5" height="1.5" fill="#F0C0B8"/><rect x="0" y="13.6" width="16" height="1" fill="#1A6A50"/></svg>
<div style="position:absolute;left:25px;top:9px;height:16px;line-height:16px;white-space:nowrap;color:#FFFFFF;font-weight:bold;font-size:13.3px;text-shadow:1px 1px 0 #0A1E8C;">Direzioni di armatura e verifica nel plinto</div>
</div>
<div style="position:absolute;left:456px;top:645px;width:21px;height:21px;border:1px solid #FFFFFF;border-radius:3px;background:radial-gradient(circle at 30% 30%,#F0A080,#E06040 55%,#C04020);">
<svg style="left:0;top:0" width="19" height="19"><path d="M5 5 L14 14 M14 5 L5 14" stroke="#fff" stroke-width="2"/></svg>
</div>
<div style="position:absolute;left:25px;top:670px;width:454px;height:46px;background:#FFFFFF;"></div>
<div style="position:absolute;left:25px;top:670px;width:450px;height:15px;background:#ECE9D8;"></div>
<div style="position:absolute;left:25px;top:670px;width:14px;height:43px;background:#ECE9D8;"></div>
<div style="position:absolute;left:39px;top:685px;width:33px;height:28px;background:#DDFBFB;"></div>
<div style="position:absolute;left:72px;top:685px;width:54px;height:28px;background:#F9F8F3;"></div>
<div style="position:absolute;left:126px;top:685px;width:45px;height:28px;background:#E4E4FA;"></div>
<div style="position:absolute;left:171px;top:685px;width:44px;height:28px;background:#E4E4FA;"></div>
<div style="position:absolute;left:215px;top:685px;width:43px;height:28px;background:#E4E4FA;"></div>
<div style="position:absolute;left:258px;top:685px;width:45px;height:28px;background:#E4E4FA;"></div>
<div style="position:absolute;left:303px;top:685px;width:66px;height:28px;background:#EEFBFF;"></div>
<div style="position:absolute;left:369px;top:685px;width:66px;height:28px;background:#EEFBFF;"></div>
<div style="position:absolute;left:435px;top:685px;width:40px;height:28px;background:#F4F4F4;"></div>
<div style="position:absolute;left:39px;top:699px;width:436px;height:1px;background:#C9C9C2;"></div>
<div style="position:absolute;left:39px;top:713px;width:436px;height:1px;background:#C9C9C2;"></div>
<div style="position:absolute;left:72px;top:685px;width:1px;height:28px;background:#C9C9C2;"></div>
<div style="position:absolute;left:126px;top:685px;width:1px;height:28px;background:#C9C9C2;"></div>
<div style="position:absolute;left:171px;top:685px;width:1px;height:28px;background:#C9C9C2;"></div>
<div style="position:absolute;left:215px;top:685px;width:1px;height:28px;background:#C9C9C2;"></div>
<div style="position:absolute;left:258px;top:685px;width:1px;height:28px;background:#C9C9C2;"></div>
<div style="position:absolute;left:303px;top:685px;width:1px;height:28px;background:#C9C9C2;"></div>
<div style="position:absolute;left:369px;top:685px;width:1px;height:28px;background:#C9C9C2;"></div>
<div style="position:absolute;left:435px;top:685px;width:1px;height:28px;background:#C9C9C2;"></div>
<div style="position:absolute;left:475px;top:685px;width:1px;height:28px;background:#C9C9C2;"></div>
<div style="position:absolute;left:25px;top:670px;width:451px;height:1px;background:#6F6F6F;"></div>
<div style="position:absolute;left:25px;top:670px;width:1px;height:44px;background:#6F6F6F;"></div>
<div style="position:absolute;left:25px;top:685px;width:451px;height:1px;background:#6F6F6F;"></div>
<div style="position:absolute;left:39px;top:670px;width:1px;height:15px;background:#6F6F6F;"></div>
<div style="position:absolute;left:72px;top:670px;width:1px;height:15px;background:#6F6F6F;"></div>
<div style="position:absolute;left:126px;top:670px;width:1px;height:15px;background:#6F6F6F;"></div>
<div style="position:absolute;left:171px;top:670px;width:1px;height:15px;background:#6F6F6F;"></div>
<div style="position:absolute;left:215px;top:670px;width:1px;height:15px;background:#6F6F6F;"></div>
<div style="position:absolute;left:258px;top:670px;width:1px;height:15px;background:#6F6F6F;"></div>
<div style="position:absolute;left:303px;top:670px;width:1px;height:15px;background:#6F6F6F;"></div>
<div style="position:absolute;left:369px;top:670px;width:1px;height:15px;background:#6F6F6F;"></div>
<div style="position:absolute;left:435px;top:670px;width:1px;height:15px;background:#6F6F6F;"></div>
<div style="position:absolute;left:475px;top:670px;width:1px;height:15px;background:#6F6F6F;"></div>
<div style="position:absolute;left:39px;top:670px;width:1px;height:44px;background:#6F6F6F;"></div>
<div style="position:absolute;left:25px;top:699px;width:14px;height:1px;background:#6F6F6F;"></div>
<div style="position:absolute;left:25px;top:713px;width:14px;height:1px;background:#6F6F6F;"></div>
<div style="position:absolute;left:26px;top:671px;width:13px;height:1px;background:#FAF9F4;"></div>
<div style="position:absolute;left:26px;top:671px;width:1px;height:14px;background:#FAF9F4;"></div>
<div style="position:absolute;left:40px;top:671px;width:32px;height:1px;background:#FAF9F4;"></div>
<div style="position:absolute;left:40px;top:671px;width:1px;height:14px;background:#FAF9F4;"></div>
<div style="position:absolute;left:73px;top:671px;width:53px;height:1px;background:#FAF9F4;"></div>
<div style="position:absolute;left:73px;top:671px;width:1px;height:14px;background:#FAF9F4;"></div>
<div style="position:absolute;left:127px;top:671px;width:44px;height:1px;background:#FAF9F4;"></div>
<div style="position:absolute;left:127px;top:671px;width:1px;height:14px;background:#FAF9F4;"></div>
<div style="position:absolute;left:172px;top:671px;width:43px;height:1px;background:#FAF9F4;"></div>
<div style="position:absolute;left:172px;top:671px;width:1px;height:14px;background:#FAF9F4;"></div>
<div style="position:absolute;left:216px;top:671px;width:42px;height:1px;background:#FAF9F4;"></div>
<div style="position:absolute;left:216px;top:671px;width:1px;height:14px;background:#FAF9F4;"></div>
<div style="position:absolute;left:259px;top:671px;width:44px;height:1px;background:#FAF9F4;"></div>
<div style="position:absolute;left:259px;top:671px;width:1px;height:14px;background:#FAF9F4;"></div>
<div style="position:absolute;left:304px;top:671px;width:65px;height:1px;background:#FAF9F4;"></div>
<div style="position:absolute;left:304px;top:671px;width:1px;height:14px;background:#FAF9F4;"></div>
<div style="position:absolute;left:370px;top:671px;width:65px;height:1px;background:#FAF9F4;"></div>
<div style="position:absolute;left:370px;top:671px;width:1px;height:14px;background:#FAF9F4;"></div>
<div style="position:absolute;left:436px;top:671px;width:39px;height:1px;background:#FAF9F4;"></div>
<div style="position:absolute;left:436px;top:671px;width:1px;height:14px;background:#FAF9F4;"></div>
<div style="position:absolute;left:26px;top:686px;width:1px;height:13px;background:#FAF9F4;"></div>
<div style="position:absolute;left:26px;top:686px;width:13px;height:1px;background:#FAF9F4;"></div>
<div style="position:absolute;left:26px;top:700px;width:1px;height:13px;background:#FAF9F4;"></div>
<div style="position:absolute;left:26px;top:700px;width:13px;height:1px;background:#FAF9F4;"></div>
<div style="position:absolute;left:39px;width:33px;top:671px;height:15px;line-height:15px;white-space:nowrap;text-align:center;">dir</div>
<div style="position:absolute;left:76px;top:671px;height:15px;line-height:15px;white-space:nowrap;">nome</div>
<div style="position:absolute;right:699px;top:671px;height:15px;line-height:15px;white-space:nowrap;text-align:right;">x1</div>
<div style="position:absolute;right:655px;top:671px;height:15px;line-height:15px;white-space:nowrap;text-align:right;">y1</div>
<div style="position:absolute;right:612px;top:671px;height:15px;line-height:15px;white-space:nowrap;text-align:right;">x2</div>
<div style="position:absolute;right:567px;top:671px;height:15px;line-height:15px;white-space:nowrap;text-align:right;">y2</div>
<div style="position:absolute;left:307px;top:671px;height:15px;line-height:15px;white-space:nowrap;">verifiche</div>
<div style="position:absolute;left:373px;top:671px;height:15px;line-height:15px;white-space:nowrap;">armature</div>
<div style="position:absolute;right:395px;top:671px;height:15px;line-height:15px;white-space:nowrap;text-align:right;">bxa</div>
<div style="position:absolute;left:39px;width:33px;top:686px;height:14px;line-height:14px;white-space:nowrap;text-align:center;">1</div>
<div style="position:absolute;left:76px;top:686px;height:14px;line-height:14px;white-space:nowrap;">D1</div>
<div style="position:absolute;right:699px;top:686px;height:14px;line-height:14px;white-space:nowrap;text-align:right;">0,0</div>
<div style="position:absolute;right:655px;top:686px;height:14px;line-height:14px;white-space:nowrap;text-align:right;">20,0</div>
<div style="position:absolute;right:612px;top:686px;height:14px;line-height:14px;white-space:nowrap;text-align:right;">500,0</div>
<div style="position:absolute;right:567px;top:686px;height:14px;line-height:14px;white-space:nowrap;text-align:right;">20,0</div>
<div style="position:absolute;left:307px;top:686px;height:14px;line-height:14px;white-space:nowrap;">presenti</div>
<div style="position:absolute;left:373px;top:686px;height:14px;line-height:14px;white-space:nowrap;">diffuse</div>
<div style="position:absolute;left:357px;top:687px;width:11px;height:12px;background:#ECE9D8;opacity:0.55;"></div>
<svg style="left:359px;top:692px" width="6" height="3" viewBox="0 0 6 3"><path d="M0 0 H6 L3 3 Z" fill="#000"/></svg>
<div style="position:absolute;left:423px;top:687px;width:11px;height:12px;background:#ECE9D8;opacity:0.55;"></div>
<svg style="left:425px;top:692px" width="6" height="3" viewBox="0 0 6 3"><path d="M0 0 H6 L3 3 Z" fill="#000"/></svg>
<div style="position:absolute;left:39px;width:33px;top:700px;height:14px;line-height:14px;white-space:nowrap;text-align:center;">2</div>
<div style="position:absolute;left:76px;top:700px;height:14px;line-height:14px;white-space:nowrap;">D2</div>
<div style="position:absolute;right:699px;top:700px;height:14px;line-height:14px;white-space:nowrap;text-align:right;">50,0</div>
<div style="position:absolute;right:655px;top:700px;height:14px;line-height:14px;white-space:nowrap;text-align:right;">0,0</div>
<div style="position:absolute;right:612px;top:700px;height:14px;line-height:14px;white-space:nowrap;text-align:right;">50,0</div>
<div style="position:absolute;right:567px;top:700px;height:14px;line-height:14px;white-space:nowrap;text-align:right;">400,0</div>
<div style="position:absolute;left:307px;top:700px;height:14px;line-height:14px;white-space:nowrap;">presenti</div>
<div style="position:absolute;left:373px;top:700px;height:14px;line-height:14px;white-space:nowrap;">diffuse</div>
<div style="position:absolute;left:357px;top:701px;width:11px;height:12px;background:#ECE9D8;opacity:0.55;"></div>
<svg style="left:359px;top:706px" width="6" height="3" viewBox="0 0 6 3"><path d="M0 0 H6 L3 3 Z" fill="#000"/></svg>
<div style="position:absolute;left:423px;top:701px;width:11px;height:12px;background:#ECE9D8;opacity:0.55;"></div>
<svg style="left:425px;top:706px" width="6" height="3" viewBox="0 0 6 3"><path d="M0 0 H6 L3 3 Z" fill="#000"/></svg>
<svg style="left:30px;top:702px" width="7" height="10" viewBox="0 0 7 10"><path d="M0 0 L7 5 L0 10 Z" fill="#000"/></svg>
<div style="position:absolute;left:404px;top:700px;width:1px;height:13px;background:#000;"></div>
<div style="position:absolute;left:4px;top:30px;width:861px;height:1px;background:#FAFBFF;"></div>
<div style="position:absolute;left:4px;top:31px;width:1px;height:733px;background:#E8EEFA;"></div>
<div style="position:absolute;left:863px;top:31px;width:2px;height:733px;background:#E8EEFA;"></div>
<div style="position:absolute;left:5px;top:80px;width:858px;height:1px;background:#6E6E6E;"></div>
<div style="position:absolute;left:4px;top:743px;width:861px;height:2px;background:#FFFFFF;"></div>
<div style="position:absolute;left:4px;top:745px;width:861px;height:2px;background:#ECE9D8;"></div>
<div style="position:absolute;left:4px;top:747px;width:861px;height:1px;background:#ACA899;"></div>
<div style="position:absolute;left:4px;top:748px;width:861px;height:16px;background:#ECE9D8;"></div>
<svg style="left:851px;top:751px" width="13" height="13" viewBox="0 0 13 13"><path d="M12 1 L1 12 M12 5 L5 12 M12 9 L9 12" stroke="#A8A595" stroke-width="1.2"/><path d="M12.8 2 L2 12.8 M12.8 6 L6 12.8 M12.8 10 L10 12.8" stroke="#fff" stroke-width="0.8"/></svg>
<div style="position:absolute;left:5px;top:749px;height:14px;line-height:14px;white-space:nowrap;">Progetto e verifica di plinti su pali</div>
</body></html>
